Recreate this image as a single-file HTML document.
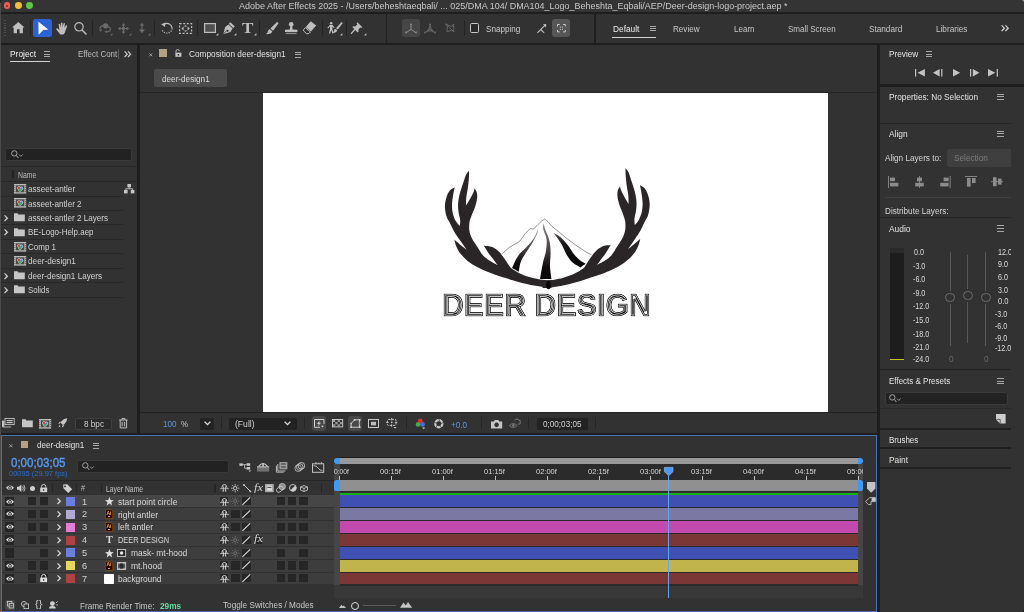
<!DOCTYPE html>
<html><head><meta charset="utf-8"><title>Adobe After Effects 2025</title>
<style>
*{box-sizing:border-box;margin:0;padding:0}
html,body{width:1024px;height:612px;overflow:hidden;background:#1e1e1e}
body{position:relative;font-family:"Liberation Sans","DejaVu Sans",sans-serif;font-size:9px;color:#c8c8c8}
.a{position:absolute}
.t{position:absolute;white-space:nowrap;line-height:14px;height:14px}
svg{position:absolute;overflow:visible}
</style></head><body><div id="app" style="position:absolute;left:0;top:0;width:1024px;height:612px;will-change:transform">
<div class="a" style="left:0.00px;top:0.00px;width:1024.00px;height:12.20px;background:#343434;"></div>
<div class="a" style="left:0.00px;top:13.80px;width:1024.00px;height:28.90px;background:#323232;"></div>
<div class="a" style="left:1.00px;top:45.00px;width:135.60px;height:387.60px;background:#323232;"></div>
<div class="a" style="left:139.50px;top:45.00px;width:737.40px;height:387.60px;background:#323232;"></div>
<div class="a" style="left:880.00px;top:45.00px;width:144.00px;height:567.00px;background:#323232;"></div>
<div class="a" style="left:0.00px;top:3.00px;width:0.90px;height:609.00px;background:#4b4b4b;"></div>
<div class="a" style="left:3.60px;top:2.20px;width:6.80px;height:6.80px;background:#ec5f57;border-radius:50%"></div>
<div class="a" style="left:14.90px;top:2.20px;width:6.80px;height:6.80px;background:#f5bd30;border-radius:50%"></div>
<div class="a" style="left:26.40px;top:2.20px;width:6.80px;height:6.80px;background:#5ec743;border-radius:50%"></div>
<div class="a" style="left:5.90px;top:4.50px;width:2.20px;height:2.20px;background:#8a1a14;border-radius:50%"></div>
<div class="t" style="left:238.50px;top:-1.20px;font-size:8.9px;color:#c9c9c9;transform:scaleX(1.0110);transform-origin:0 50%;">Adobe After Effects 2025 - /Users/beheshtaeqbali/ ... 025/DMA 104/ DMA104_Logo_Beheshta_Eqbali/AEP/Deer-design-logo-project.aep *</div>
<div class="a" style="left:3.90px;top:20.20px;width:1.80px;height:1.20px;background:#4c4c4c;"></div>
<div class="a" style="left:3.90px;top:22.60px;width:1.80px;height:1.20px;background:#4c4c4c;"></div>
<div class="a" style="left:3.90px;top:25.00px;width:1.80px;height:1.20px;background:#4c4c4c;"></div>
<div class="a" style="left:3.90px;top:27.40px;width:1.80px;height:1.20px;background:#4c4c4c;"></div>
<div class="a" style="left:3.90px;top:29.80px;width:1.80px;height:1.20px;background:#4c4c4c;"></div>
<div class="a" style="left:3.90px;top:32.20px;width:1.80px;height:1.20px;background:#4c4c4c;"></div>
<div class="a" style="left:3.90px;top:34.60px;width:1.80px;height:1.20px;background:#4c4c4c;"></div>
<svg style="left:11.90px;top:22.40px;" width="12.6" height="11.2" viewBox="0 0 12.6 11.2"><path d="M6.3 0 L12.6 5.6 L10.9 5.6 L10.9 11.2 L7.6 11.2 L7.6 7.2 L5 7.2 L5 11.2 L1.7 11.2 L1.7 5.6 L0 5.6 Z" fill="#bebebe"/></svg>
<div class="a" style="left:29.90px;top:19.80px;width:1.00px;height:16.00px;background:#242424;"></div>
<div class="a" style="left:33.10px;top:18.90px;width:18.50px;height:18.10px;background:#2d62d6;border-radius:2.5px"></div>
<svg style="left:33.10px;top:18.90px;" width="18.5" height="18.1" viewBox="0 0 18.5 18.1"><path d="M5.4 2.7 L15.2 10.6 L10.2 11 L5.6 15.8 Z" fill="#fff"/></svg>
<svg style="left:55.60px;top:22.00px;" width="12" height="12.4" viewBox="0 0 12 12.4"><path d="M3.2 6.2 L2.6 2.2 Q3.4 1.4 4 2.2 L4.8 5.4 L4.9 0.9 Q5.8 0 6.5 0.9 L6.6 5.3 L7.6 1.3 Q8.6 0.7 9 1.6 L8.4 5.8 L10.2 3.2 Q11.2 2.9 11.3 3.9 L9.6 8.2 Q9 11.2 7.4 12.4 L4.4 12.4 Q2.6 10.6 0.2 7.2 Q0.4 5.9 1.6 6.3 L3.4 8.2 Z" fill="#bebebe"/></svg>
<svg style="left:73.00px;top:21.00px;" width="14" height="14" viewBox="0 0 14 14"><circle cx="6" cy="5.8" r="4.2" fill="none" stroke="#bebebe" stroke-width="1.2"/><path d="M9 9 L13 13" stroke="#bebebe" stroke-width="1.5" stroke-linecap="round"/></svg>
<div class="a" style="left:92.10px;top:19.80px;width:1.00px;height:16.00px;background:#242424;"></div>
<svg style="left:98.50px;top:22.80px;" width="12.4" height="10" viewBox="0 0 12.4 10"><circle cx="6.6" cy="2.8" r="2.6" fill="#6c6c6c"/><path d="M4.2 2.6 Q0.4 3.4 1.2 6.2 M8.8 3.6 Q12.6 5 11 7.6 Q9.6 9.2 7 8.8" fill="none" stroke="#6c6c6c" stroke-width="1.1"/><path d="M0 6.4 L3.2 6.4 L1.6 9 Z M7.6 7.4 L7.6 10 L5.4 8.8 Z" fill="#6c6c6c"/></svg>
<svg style="left:110.20px;top:33.00px;" width="2.4" height="2.4" viewBox="0 0 2.4 2.4"><path d="M2.4 0 L2.4 2.4 L0 2.4 Z" fill="#6c6c6c"/></svg>
<svg style="left:118.00px;top:22.50px;" width="11" height="11" viewBox="0 0 11 11"><path d="M5.5 0 L7.4 2.4 L6.1 2.4 L6.1 4.9 L8.6 4.9 L8.6 3.6 L11 5.5 L8.6 7.4 L8.6 6.1 L6.1 6.1 L6.1 8.6 L7.4 8.6 L5.5 11 L3.6 8.6 L4.9 8.6 L4.9 6.1 L2.4 6.1 L2.4 7.4 L0 5.5 L2.4 3.6 L2.4 4.9 L4.9 4.9 L4.9 2.4 L3.6 2.4 Z" fill="#6c6c6c"/><circle cx="5.5" cy="5.5" r="1.7" fill="#6c6c6c"/></svg>
<svg style="left:128.80px;top:33.00px;" width="2.4" height="2.4" viewBox="0 0 2.4 2.4"><path d="M2.4 0 L2.4 2.4 L0 2.4 Z" fill="#6c6c6c"/></svg>
<svg style="left:139.20px;top:23.00px;" width="6" height="10.2" viewBox="0 0 6 10.2"><path d="M3 0 L5.2 2.6 L3.6 2.6 L3.6 6.4 L6 6.4 L3 10.2 L0 6.4 L2.4 6.4 L2.4 2.6 L0.8 2.6 Z" fill="#6c6c6c"/></svg>
<svg style="left:147.60px;top:33.00px;" width="2.4" height="2.4" viewBox="0 0 2.4 2.4"><path d="M2.4 0 L2.4 2.4 L0 2.4 Z" fill="#6c6c6c"/></svg>
<div class="a" style="left:154.10px;top:19.80px;width:1.00px;height:16.00px;background:#242424;"></div>
<svg style="left:161.00px;top:22.40px;" width="12" height="12" viewBox="0 0 12 12"><path d="M3.2 2.2 A5.3 5.3 0 0 1 11.2 6.4" fill="none" stroke="#bebebe" stroke-width="1.2"/><path d="M11.2 6.4 A5.3 5.3 0 0 1 1.2 8.2" fill="none" stroke="#bebebe" stroke-width="1.2" stroke-dasharray="1.1 1.3"/><path d="M0.2 2.2 L4.6 0.6 L3.8 5 Z" fill="#bebebe"/></svg>
<svg style="left:179.00px;top:22.60px;" width="13.2" height="11" viewBox="0 0 13.2 11"><rect x="0.6" y="0.6" width="12" height="9.8" fill="none" stroke="#bebebe" stroke-width="1.2" stroke-dasharray="2 1.6"/><path d="M2.4 5.5 L4.6 3.6 L4.6 7.4 Z M10.8 5.5 L8.6 3.6 L8.6 7.4 Z M6.6 2 L8.2 3.6 L5 3.6 Z M6.6 9 L8.2 7.4 L5 7.4 Z" fill="#bebebe"/></svg>
<div class="a" style="left:197.10px;top:19.80px;width:1.00px;height:16.00px;background:#242424;"></div>
<svg style="left:204.00px;top:23.00px;" width="12" height="10" viewBox="0 0 12 10"><rect x="0.6" y="0.6" width="10.8" height="8.8" fill="#505050" stroke="#bebebe" stroke-width="1.2"/></svg>
<svg style="left:216.40px;top:33.00px;" width="2.4" height="2.4" viewBox="0 0 2.4 2.4"><path d="M2.4 0 L2.4 2.4 L0 2.4 Z" fill="#bebebe"/></svg>
<svg style="left:222.80px;top:22.00px;" width="12" height="12.4" viewBox="0 0 12 12.4"><path d="M7.4 0.2 L11.8 4.4 L10.2 6 L5.8 1.8 Z" fill="#bebebe"/><path d="M5.4 2.4 L9.6 6.6 L7.4 10 L0.2 12.2 L2.2 5 Z M4.6 7.8 A1 1 0 1 0 4.61 7.8 Z" fill="#bebebe" fill-rule="evenodd"/><path d="M0.4 12 L4.2 8.2" stroke="#323232" stroke-width="0.8"/></svg>
<svg style="left:234.40px;top:33.00px;" width="2.4" height="2.4" viewBox="0 0 2.4 2.4"><path d="M2.4 0 L2.4 2.4 L0 2.4 Z" fill="#bebebe"/></svg>
<div class="t" style="left:242.20px;top:20.60px;font-size:15px;color:#bebebe;font-weight:700;font-family:'Liberation Serif','DejaVu Serif',serif;transform:scaleX(1.1382);transform-origin:0 50%;">T</div>
<svg style="left:253.60px;top:33.00px;" width="2.4" height="2.4" viewBox="0 0 2.4 2.4"><path d="M2.4 0 L2.4 2.4 L0 2.4 Z" fill="#bebebe"/></svg>
<div class="a" style="left:259.00px;top:19.80px;width:1.00px;height:16.00px;background:#242424;"></div>
<svg style="left:266.00px;top:22.00px;" width="12.4" height="12.2" viewBox="0 0 12.4 12.2"><path d="M11 0 Q12.8 0.2 12.3 1.8 L7 8.8 L4.4 6.6 Z" fill="#bebebe"/><path d="M3.8 7.2 L6.2 9.2 Q6 12 0 12.2 Q2 10.8 2 9 Q2.4 7.2 3.8 7.2 Z" fill="#bebebe"/></svg>
<svg style="left:285.00px;top:21.80px;" width="12.4" height="12.2" viewBox="0 0 12.4 12.2"><circle cx="6.2" cy="2.3" r="2.3" fill="#bebebe"/><path d="M5.2 3.6 L7.2 3.6 L7.6 7.4 L12.4 7.8 L12.4 10 L0 10 L0 7.8 L4.8 7.4 Z" fill="#bebebe"/><rect x="0.8" y="10.8" width="10.8" height="1.3" fill="#8a8a8a"/></svg>
<svg style="left:303.40px;top:21.40px;" width="13.4" height="13" viewBox="0 0 13.4 13"><path d="M7.8 0.2 L13.2 4.6 L8 10.6 L2.8 6 Z" fill="#bebebe"/><path d="M2.4 6.6 L7.4 11 L5.8 12.6 L3.8 12.8 L0.6 10 L0.6 8.6 Z" fill="none" stroke="#bebebe" stroke-width="1"/></svg>
<div class="a" style="left:321.90px;top:19.80px;width:1.00px;height:16.00px;background:#242424;"></div>
<svg style="left:326.80px;top:22.00px;" width="15.6" height="11.6" viewBox="0 0 15.6 11.6"><circle cx="4.2" cy="1.3" r="1.3" fill="#bebebe"/><path d="M2.8 3 L5.6 3 L7.6 5.4 L7 6 L5.4 4.8 L5.4 7.2 L6.6 11.2 L5.4 11.4 L4.2 8 L3.2 11.4 L2 11.2 L3 7 L3 4.6 L1 6.4 L0.4 5.8 Z" fill="#bebebe"/><path d="M14.6 0 Q15.8 0.4 15.4 1.4 L10.8 7.6 L9 6.2 Z" fill="#bebebe"/><path d="M8.4 6.8 L10.2 8.2 Q10 10.6 5.4 11 Q7 9.8 7 8.4 Q7.4 6.8 8.4 6.8 Z" fill="#bebebe"/></svg>
<svg style="left:339.80px;top:33.00px;" width="2.4" height="2.4" viewBox="0 0 2.4 2.4"><path d="M2.4 0 L2.4 2.4 L0 2.4 Z" fill="#bebebe"/></svg>
<div class="a" style="left:346.00px;top:19.80px;width:1.00px;height:16.00px;background:#242424;"></div>
<svg style="left:351.20px;top:21.60px;" width="11.6" height="11.8" viewBox="0 0 11.6 11.8"><path d="M6.4 0.2 L11.4 5.2 L10.2 6 L9.2 5.4 L7.4 7.4 L7.6 9.6 L6.6 10.4 L1.4 5 L2.2 4.2 L4.4 4.4 L6.4 2.6 L5.6 1.4 Z" fill="#bebebe"/><path d="M3.6 7.8 L0.4 11.4" stroke="#bebebe" stroke-width="1.3" stroke-linecap="round"/></svg>
<svg style="left:363.80px;top:33.00px;" width="2.4" height="2.4" viewBox="0 0 2.4 2.4"><path d="M2.4 0 L2.4 2.4 L0 2.4 Z" fill="#bebebe"/></svg>
<div class="a" style="left:385.90px;top:13.80px;width:1.50px;height:28.90px;background:#1f1f1f;"></div>
<div class="a" style="left:401.90px;top:19.20px;width:17.90px;height:17.60px;background:#464646;border-radius:3px"></div>
<svg style="left:404.70px;top:22.50px;" width="12" height="11" viewBox="0 0 12 11"><path d="M6 1.4 L6 6.4 L1.4 9.4 M6 6.4 L10.6 9.4" fill="none" stroke="#8c8c8c" stroke-width="1"/><path d="M6 0 L7.3 2.2 L4.7 2.2 Z M0 10.4 L0.7 7.9 L2.5 9.9 Z M12 10.4 L11.3 7.9 L9.5 9.9 Z" fill="#8c8c8c"/></svg>
<svg style="left:424.20px;top:22.50px;" width="12" height="11" viewBox="0 0 12 11"><path d="M6 1.4 L6 6.4 L1.4 9.4 M6 6.4 L10.6 9.4" fill="none" stroke="#6c6c6c" stroke-width="1"/><path d="M6 0 L7.3 2.2 L4.7 2.2 Z M0 10.4 L0.7 7.9 L2.5 9.9 Z M12 10.4 L11.3 7.9 L9.5 9.9 Z" fill="#6c6c6c"/><path d="M6 3.4 L8.8 8 L3.2 8 Z" fill="none" stroke="#6c6c6c" stroke-width="0.9"/></svg>
<svg style="left:445.00px;top:23.00px;" width="9.6" height="9.8" viewBox="0 0 9.6 9.8"><path d="M2.4 2.4 L7.4 3.4 L8.6 1 L8.8 8.8 L6.6 7.2 L2 8.8 Z" fill="none" stroke="#6c6c6c" stroke-width="0.9"/><path d="M0.4 0.4 L3 1 L1 3 Z" fill="#6c6c6c"/><path d="M0.8 0.8 L8 8" stroke="#6c6c6c" stroke-width="0.7"/></svg>
<div class="a" style="left:463.90px;top:19.80px;width:1.00px;height:16.00px;background:#242424;"></div>
<div class="a" style="left:469.80px;top:23.30px;width:9.20px;height:9.30px;background:#2a2a2a;border:1.4px solid #cacaca;border-radius:1.6px"></div>
<div class="t" style="left:486.00px;top:21.90px;font-size:9.4px;color:#cdcdcd;transform:scaleX(0.8656);transform-origin:0 50%;">Snapping</div>
<svg style="left:536.50px;top:23.90px;" width="9.4" height="9.2" viewBox="0 0 9.4 9.2"><path d="M3.6 5.6 L8.4 0.8" stroke="#bebebe" stroke-width="1.1"/><path d="M9.3 0 L9 3.4 L5.9 0.3 Z" fill="#bebebe"/><path d="M0.4 8.8 L3.8 5.6 L7.2 8.8" fill="none" stroke="#bebebe" stroke-width="1.1"/></svg>
<div class="a" style="left:552.00px;top:18.90px;width:17.90px;height:17.90px;background:#565656;border-radius:3px"></div>
<svg style="left:556.60px;top:23.80px;" width="8.8" height="8.4" viewBox="0 0 8.8 8.4"><path d="M0.5 2.4 L0.5 0.5 L2.6 0.5 M6.2 0.5 L8.3 0.5 L8.3 2.4 M8.3 6 L8.3 7.9 L6.2 7.9 M2.6 7.9 L0.5 7.9 L0.5 6" fill="none" stroke="#d0d0d0" stroke-width="1"/><path d="M3.4 2.6 L3.4 3.6 M5.4 2.6 L5.4 3.6 M3.4 4.8 L3.4 5.8 M5.4 4.8 L5.4 5.8" stroke="#d0d0d0" stroke-width="1"/></svg>
<div class="a" style="left:594.20px;top:13.80px;width:1.50px;height:28.90px;background:#1f1f1f;"></div>
<div class="t" style="left:612.60px;top:21.90px;font-size:9.3px;color:#ececec;transform:scaleX(0.8959);transform-origin:0 50%;">Default</div>
<div class="a" style="left:649.60px;top:25.60px;width:6.00px;height:0.80px;background:#a8a8a8;"></div>
<div class="a" style="left:649.60px;top:27.90px;width:6.00px;height:0.80px;background:#a8a8a8;"></div>
<div class="a" style="left:649.60px;top:30.20px;width:6.00px;height:0.80px;background:#a8a8a8;"></div>
<div class="a" style="left:611.80px;top:36.50px;width:43.80px;height:1.60px;background:#d2d2d2;"></div>
<div class="t" style="left:673.00px;top:21.90px;font-size:9.3px;color:#c8c8c8;transform:scaleX(0.8726);transform-origin:0 50%;">Review</div>
<div class="t" style="left:733.60px;top:21.90px;font-size:9.3px;color:#c8c8c8;transform:scaleX(0.8662);transform-origin:0 50%;">Learn</div>
<div class="t" style="left:788.00px;top:21.90px;font-size:9.3px;color:#c8c8c8;transform:scaleX(0.8608);transform-origin:0 50%;">Small Screen</div>
<div class="t" style="left:869.00px;top:21.90px;font-size:9.3px;color:#c8c8c8;transform:scaleX(0.8798);transform-origin:0 50%;">Standard</div>
<div class="t" style="left:936.00px;top:21.90px;font-size:9.3px;color:#c8c8c8;transform:scaleX(0.8806);transform-origin:0 50%;">Libraries</div>
<svg style="left:1001.00px;top:25.20px;" width="8" height="6.4" viewBox="0 0 8 6.4"><path d="M0.6 0.4 L3.4 3.2 L0.6 6 M4.4 0.4 L7.2 3.2 L4.4 6" fill="none" stroke="#d8d8d8" stroke-width="1.2"/></svg>
<div class="t" style="left:9.50px;top:47.20px;font-size:9.2px;color:#f0f0f0;transform:scaleX(0.9123);transform-origin:0 50%;">Project</div>
<div class="a" style="left:44.00px;top:51.30px;width:6.00px;height:0.80px;background:#a8a8a8;"></div>
<div class="a" style="left:44.00px;top:53.80px;width:6.00px;height:0.80px;background:#a8a8a8;"></div>
<div class="a" style="left:44.00px;top:56.30px;width:6.00px;height:0.80px;background:#a8a8a8;"></div>
<div class="a" style="left:9.50px;top:60.60px;width:40.60px;height:1.30px;background:#d2d2d2;"></div>
<div class="t" style="left:78.20px;top:47.20px;font-size:9.2px;color:#bdbdbd;transform:scaleX(0.8654);transform-origin:0 50%;">Effect Cont</div>
<div class="a" style="left:117.80px;top:48.50px;width:0.80px;height:10.50px;background:#5a5a5a;"></div>
<svg style="left:124.40px;top:51.00px;" width="7.4" height="6.4" viewBox="0 0 7.4 6.4"><path d="M0.6 0.4 L3.2 3.2 L0.6 6 M4 0.4 L6.6 3.2 L4 6" fill="none" stroke="#d0d0d0" stroke-width="1.2"/></svg>
<div class="a" style="left:5.40px;top:147.60px;width:126.30px;height:13.80px;background:#222222;border-radius:2.5px;border:0.6px solid #3a3a3a"></div>
<svg style="left:10.60px;top:150.30px;" width="12.6" height="9" viewBox="0 0 12.6 9"><circle cx="3.3" cy="3.4" r="2.7" fill="none" stroke="#b0b0b0" stroke-width="0.9"/><path d="M5.3 5.5 L7.4 8" stroke="#b0b0b0" stroke-width="1"/><path d="M8 4.6 L9.8 6.4 L11.8 4.4" fill="none" stroke="#b0b0b0" stroke-width="0.8"/></svg>
<div class="a" style="left:1.00px;top:166.20px;width:135.60px;height:0.80px;background:#282828;"></div>
<div class="a" style="left:11.90px;top:170.40px;width:1.70px;height:8.00px;background:#222222;"></div>
<div class="t" style="left:17.70px;top:168.40px;font-size:8.3px;color:#bcbcbc;transform:scaleX(0.8265);transform-origin:0 50%;">Name</div>
<div class="a" style="left:1.00px;top:181.00px;width:135.60px;height:0.80px;background:#282828;"></div>
<div class="t" style="left:28.00px;top:182.10px;font-size:9.2px;color:#d2d2d2;transform:scaleX(0.8866);transform-origin:0 50%;">asseet-antler</div>
<svg style="left:13.60px;top:183.90px;" width="12.2" height="9.6" viewBox="0 0 12.2 9.6"><rect x="0" y="0" width="12.2" height="9.6" fill="#bcbcbc"/><rect x="1.9" y="1.3" width="8.4" height="7" fill="#4a4a4a"/><circle cx="4.9" cy="4" r="1.8" fill="#d8d8d8"/><circle cx="7.3" cy="4.4" r="1.8" fill="#d8d8d8"/><circle cx="6" cy="6" r="1.7" fill="#d8d8d8"/><circle cx="4.9" cy="4" r="1.25" fill="#d04a3a"/><circle cx="7.3" cy="4.4" r="1.25" fill="#3a8fd8"/><circle cx="6" cy="6" r="1.2" fill="#3faa50"/><path d="M0.4 1.6 h0.9 M0.4 3.6 h0.9 M0.4 5.6 h0.9 M0.4 7.6 h0.9 M10.9 1.6 h0.9 M10.9 3.6 h0.9 M10.9 5.6 h0.9 M10.9 7.6 h0.9" stroke="#3a3a3a" stroke-width="0.9"/></svg>
<div class="a" style="left:1.00px;top:195.50px;width:122.00px;height:0.80px;background:#282828;"></div>
<div class="t" style="left:28.00px;top:196.55px;font-size:9.2px;color:#d2d2d2;transform:scaleX(0.8819);transform-origin:0 50%;">asseet-antler 2</div>
<svg style="left:13.60px;top:198.35px;" width="12.2" height="9.6" viewBox="0 0 12.2 9.6"><rect x="0" y="0" width="12.2" height="9.6" fill="#bcbcbc"/><rect x="1.9" y="1.3" width="8.4" height="7" fill="#4a4a4a"/><circle cx="4.9" cy="4" r="1.8" fill="#d8d8d8"/><circle cx="7.3" cy="4.4" r="1.8" fill="#d8d8d8"/><circle cx="6" cy="6" r="1.7" fill="#d8d8d8"/><circle cx="4.9" cy="4" r="1.25" fill="#d04a3a"/><circle cx="7.3" cy="4.4" r="1.25" fill="#3a8fd8"/><circle cx="6" cy="6" r="1.2" fill="#3faa50"/><path d="M0.4 1.6 h0.9 M0.4 3.6 h0.9 M0.4 5.6 h0.9 M0.4 7.6 h0.9 M10.9 1.6 h0.9 M10.9 3.6 h0.9 M10.9 5.6 h0.9 M10.9 7.6 h0.9" stroke="#3a3a3a" stroke-width="0.9"/></svg>
<div class="a" style="left:1.00px;top:209.95px;width:122.00px;height:0.80px;background:#282828;"></div>
<div class="t" style="left:28.00px;top:211.00px;font-size:9.2px;color:#d2d2d2;transform:scaleX(0.8800);transform-origin:0 50%;">asseet-antler 2 Layers</div>
<svg style="left:14.30px;top:213.20px;" width="10.8" height="8.2" viewBox="0 0 10.8 8.2"><path d="M0 0.2 L3.6 0.2 L4.4 1.4 L10.8 1.4 L10.8 8.2 L0 8.2 Z" fill="#c6c6c6"/></svg>
<svg style="left:3.70px;top:215.00px;" width="4.0" height="6.4" viewBox="0 0 4 6.4"><path d="M0.5 0.4 L3.4 3.2 L0.5 6" fill="none" stroke="#d0d0d0" stroke-width="1.25"/></svg>
<div class="a" style="left:1.00px;top:224.40px;width:122.00px;height:0.80px;background:#282828;"></div>
<div class="t" style="left:28.00px;top:225.45px;font-size:9.2px;color:#d2d2d2;transform:scaleX(0.8665);transform-origin:0 50%;">BE-Logo-Help.aep</div>
<svg style="left:14.30px;top:227.65px;" width="10.8" height="8.2" viewBox="0 0 10.8 8.2"><path d="M0 0.2 L3.6 0.2 L4.4 1.4 L10.8 1.4 L10.8 8.2 L0 8.2 Z" fill="#c6c6c6"/></svg>
<svg style="left:3.70px;top:229.45px;" width="4.0" height="6.4" viewBox="0 0 4 6.4"><path d="M0.5 0.4 L3.4 3.2 L0.5 6" fill="none" stroke="#d0d0d0" stroke-width="1.25"/></svg>
<div class="a" style="left:1.00px;top:238.85px;width:122.00px;height:0.80px;background:#282828;"></div>
<div class="t" style="left:28.00px;top:239.90px;font-size:9.2px;color:#d2d2d2;transform:scaleX(0.8703);transform-origin:0 50%;">Comp 1</div>
<svg style="left:13.60px;top:241.70px;" width="12.2" height="9.6" viewBox="0 0 12.2 9.6"><rect x="0" y="0" width="12.2" height="9.6" fill="#bcbcbc"/><rect x="1.9" y="1.3" width="8.4" height="7" fill="#4a4a4a"/><circle cx="4.9" cy="4" r="1.8" fill="#d8d8d8"/><circle cx="7.3" cy="4.4" r="1.8" fill="#d8d8d8"/><circle cx="6" cy="6" r="1.7" fill="#d8d8d8"/><circle cx="4.9" cy="4" r="1.25" fill="#d04a3a"/><circle cx="7.3" cy="4.4" r="1.25" fill="#3a8fd8"/><circle cx="6" cy="6" r="1.2" fill="#3faa50"/><path d="M0.4 1.6 h0.9 M0.4 3.6 h0.9 M0.4 5.6 h0.9 M0.4 7.6 h0.9 M10.9 1.6 h0.9 M10.9 3.6 h0.9 M10.9 5.6 h0.9 M10.9 7.6 h0.9" stroke="#3a3a3a" stroke-width="0.9"/></svg>
<div class="a" style="left:1.00px;top:253.30px;width:122.00px;height:0.80px;background:#282828;"></div>
<div class="t" style="left:28.00px;top:254.35px;font-size:9.2px;color:#d2d2d2;transform:scaleX(0.8930);transform-origin:0 50%;">deer-design1</div>
<svg style="left:13.60px;top:256.15px;" width="12.2" height="9.6" viewBox="0 0 12.2 9.6"><rect x="0" y="0" width="12.2" height="9.6" fill="#bcbcbc"/><rect x="1.9" y="1.3" width="8.4" height="7" fill="#4a4a4a"/><circle cx="4.9" cy="4" r="1.8" fill="#d8d8d8"/><circle cx="7.3" cy="4.4" r="1.8" fill="#d8d8d8"/><circle cx="6" cy="6" r="1.7" fill="#d8d8d8"/><circle cx="4.9" cy="4" r="1.25" fill="#d04a3a"/><circle cx="7.3" cy="4.4" r="1.25" fill="#3a8fd8"/><circle cx="6" cy="6" r="1.2" fill="#3faa50"/><path d="M0.4 1.6 h0.9 M0.4 3.6 h0.9 M0.4 5.6 h0.9 M0.4 7.6 h0.9 M10.9 1.6 h0.9 M10.9 3.6 h0.9 M10.9 5.6 h0.9 M10.9 7.6 h0.9" stroke="#3a3a3a" stroke-width="0.9"/></svg>
<div class="a" style="left:1.00px;top:267.75px;width:122.00px;height:0.80px;background:#282828;"></div>
<div class="t" style="left:28.00px;top:268.80px;font-size:9.2px;color:#d2d2d2;transform:scaleX(0.8834);transform-origin:0 50%;">deer-design1 Layers</div>
<svg style="left:14.30px;top:271.00px;" width="10.8" height="8.2" viewBox="0 0 10.8 8.2"><path d="M0 0.2 L3.6 0.2 L4.4 1.4 L10.8 1.4 L10.8 8.2 L0 8.2 Z" fill="#c6c6c6"/></svg>
<svg style="left:3.70px;top:272.80px;" width="4.0" height="6.4" viewBox="0 0 4 6.4"><path d="M0.5 0.4 L3.4 3.2 L0.5 6" fill="none" stroke="#d0d0d0" stroke-width="1.25"/></svg>
<div class="a" style="left:1.00px;top:282.20px;width:122.00px;height:0.80px;background:#282828;"></div>
<div class="t" style="left:28.00px;top:283.25px;font-size:9.2px;color:#d2d2d2;transform:scaleX(0.8549);transform-origin:0 50%;">Solids</div>
<svg style="left:14.30px;top:285.45px;" width="10.8" height="8.2" viewBox="0 0 10.8 8.2"><path d="M0 0.2 L3.6 0.2 L4.4 1.4 L10.8 1.4 L10.8 8.2 L0 8.2 Z" fill="#c6c6c6"/></svg>
<svg style="left:3.70px;top:287.25px;" width="4.0" height="6.4" viewBox="0 0 4 6.4"><path d="M0.5 0.4 L3.4 3.2 L0.5 6" fill="none" stroke="#d0d0d0" stroke-width="1.25"/></svg>
<div class="a" style="left:1.00px;top:296.65px;width:122.00px;height:0.80px;background:#282828;"></div>
<svg style="left:124.00px;top:184.00px;" width="10.4" height="9.4" viewBox="0 0 10.4 9.4"><rect x="3.4" y="0" width="3.6" height="3.4" fill="#c6c6c6"/><rect x="0" y="6" width="3.6" height="3.4" fill="#c6c6c6"/><rect x="6.8" y="6" width="3.6" height="3.4" fill="#c6c6c6"/><path d="M5.2 3.4 L5.2 4.8 M1.8 6 L1.8 4.8 L8.6 4.8 L8.6 6" fill="none" stroke="#c6c6c6" stroke-width="0.9"/></svg>
<svg style="left:2.00px;top:418.40px;" width="12.6" height="9.6" viewBox="0 0 12.6 9.6"><rect x="3" y="0.4" width="9.2" height="6.2" fill="none" stroke="#c6c6c6" stroke-width="0.9"/><rect x="4.6" y="2" width="6" height="1.2" fill="#c6c6c6"/><rect x="4.6" y="4" width="6" height="1.2" fill="#c6c6c6"/><path d="M0.6 3 L0.6 9 L9 9" fill="none" stroke="#c6c6c6" stroke-width="0.9"/><rect x="0" y="2.6" width="2.4" height="6" fill="#c6c6c6"/></svg>
<svg style="left:22.00px;top:419.20px;" width="10.8" height="8.2" viewBox="0 0 10.8 8.2"><path d="M0 0.2 L3.6 0.2 L4.4 1.4 L10.8 1.4 L10.8 8.2 L0 8.2 Z" fill="#c6c6c6"/></svg>
<svg style="left:39.40px;top:418.60px;" width="12.2" height="9.6" viewBox="0 0 12.2 9.6"><rect x="0" y="0" width="12.2" height="9.6" fill="#bcbcbc"/><rect x="1.9" y="1.3" width="8.4" height="7" fill="#4a4a4a"/><circle cx="4.9" cy="4" r="1.8" fill="#d8d8d8"/><circle cx="7.3" cy="4.4" r="1.8" fill="#d8d8d8"/><circle cx="6" cy="6" r="1.7" fill="#d8d8d8"/><circle cx="4.9" cy="4" r="1.25" fill="#d04a3a"/><circle cx="7.3" cy="4.4" r="1.25" fill="#3a8fd8"/><circle cx="6" cy="6" r="1.2" fill="#3faa50"/><path d="M0.4 1.6 h0.9 M0.4 3.6 h0.9 M0.4 5.6 h0.9 M0.4 7.6 h0.9 M10.9 1.6 h0.9 M10.9 3.6 h0.9 M10.9 5.6 h0.9 M10.9 7.6 h0.9" stroke="#3a3a3a" stroke-width="0.9"/></svg>
<svg style="left:58.00px;top:418.00px;" width="9.4" height="10" viewBox="0 0 9.4 10"><path d="M9.2 0.2 Q9.4 3.4 6.4 6.2 L4.8 7 L2.6 4.8 L3.4 3.2 Q6 0.2 9.2 0.2 Z M1.8 5.6 L0.2 6 L1.6 3.8 L2.8 3.8 Z M4.2 7.8 L3.8 9.6 L6 8 L6 6.8 Z M1.4 7 L2.6 8.2 L0.4 9.4 Z" fill="#c6c6c6"/></svg>
<div class="a" style="left:74.60px;top:417.60px;width:37.40px;height:12.00px;background:#2a2a2a;border-radius:2px;border:0.6px solid #404040"></div>
<div class="t" style="left:83.60px;top:416.60px;font-size:9px;color:#d0d0d0;transform:scaleX(0.9078);transform-origin:0 50%;">8 bpc</div>
<svg style="left:118.80px;top:418.20px;" width="8.8" height="10.4" viewBox="0 0 8.8 10.4"><path d="M0.2 2 L8.6 2 M3 2 L3 0.5 L5.8 0.5 L5.8 2 M1.2 2 L1.2 9.9 L7.6 9.9 L7.6 2 M3.2 3.8 L3.2 8.4 M5.6 3.8 L5.6 8.4" fill="none" stroke="#c6c6c6" stroke-width="0.95"/></svg>
<svg style="left:149.20px;top:52.80px;" width="3.6" height="3.6" viewBox="0 0 3.6 3.6"><path d="M0.3 0.3 L3.3 3.3 M3.3 0.3 L0.3 3.3" stroke="#b4b4b4" stroke-width="0.8"/></svg>
<div class="a" style="left:158.80px;top:48.60px;width:8.20px;height:8.00px;background:#b5a283;"></div>
<svg style="left:175.20px;top:48.80px;" width="6.6" height="8" viewBox="0 0 6.6 8"><path d="M1 3.6 L1 2 Q1.2 0.5 2.7 0.5 Q4.2 0.5 4.3 2" fill="none" stroke="#c6c6c6" stroke-width="0.9"/><rect x="0.4" y="3.6" width="6" height="4.2" fill="#c6c6c6"/><rect x="2.7" y="5" width="1.4" height="1.6" fill="#323232"/></svg>
<div class="t" style="left:189.00px;top:47.40px;font-size:9.2px;color:#e2e2e2;transform:scaleX(0.9007);transform-origin:0 50%;">Composition deer-design1</div>
<div class="a" style="left:295.00px;top:51.50px;width:6.00px;height:0.80px;background:#a8a8a8;"></div>
<div class="a" style="left:295.00px;top:54.00px;width:6.00px;height:0.80px;background:#a8a8a8;"></div>
<div class="a" style="left:295.00px;top:56.50px;width:6.00px;height:0.80px;background:#a8a8a8;"></div>
<div class="a" style="left:154.00px;top:69.00px;width:73.00px;height:17.50px;background:#4b4b4b;border-radius:2.5px"></div>
<div class="t" style="left:161.50px;top:71.60px;font-size:9.2px;color:#d8d8d8;transform:scaleX(0.8893);transform-origin:0 50%;">deer-design1</div>
<div class="a" style="left:139.50px;top:91.60px;width:737.40px;height:1.40px;background:#262626;"></div>
<div class="a" style="left:139.50px;top:411.80px;width:737.40px;height:1.50px;background:#222222;"></div>
<div class="a" style="left:262.80px;top:92.90px;width:565.10px;height:318.90px;background:#ffffff;"></div>
<div class="t" style="left:163.00px;top:417.40px;font-size:9.2px;color:#5b96e2;transform:scaleX(0.8864);transform-origin:0 50%;">100</div>
<div class="t" style="left:181.00px;top:417.40px;font-size:9.2px;color:#c8c8c8;transform:scaleX(0.8566);transform-origin:0 50%;">%</div>
<div class="a" style="left:200.00px;top:417.60px;width:14.00px;height:12.40px;background:#222222;border-radius:2px"></div>
<svg style="left:203.60px;top:421.40px;" width="7" height="4.6" viewBox="0 0 7 4.6"><path d="M0.6 0.6 L3.5 3.6 L6.4 0.6" fill="none" stroke="#e0e0e0" stroke-width="1.3"/></svg>
<div class="a" style="left:221.10px;top:417.40px;width:1.00px;height:11.20px;background:#262626;"></div>
<div class="a" style="left:229.00px;top:417.60px;width:68.00px;height:12.40px;background:#222222;border-radius:2px"></div>
<div class="t" style="left:235.00px;top:417.20px;font-size:9.2px;color:#d0d0d0;transform:scaleX(0.9361);transform-origin:0 50%;">(Full)</div>
<svg style="left:283.60px;top:421.40px;" width="7" height="4.6" viewBox="0 0 7 4.6"><path d="M0.6 0.6 L3.5 3.6 L6.4 0.6" fill="none" stroke="#e0e0e0" stroke-width="1.3"/></svg>
<div class="a" style="left:304.20px;top:417.40px;width:1.00px;height:11.20px;background:#262626;"></div>
<div class="a" style="left:311.90px;top:415.80px;width:14.40px;height:15.00px;background:#484848;border-radius:3px"></div>
<svg style="left:314.40px;top:419.20px;" width="10.2" height="8.8" viewBox="0 0 10.2 8.8"><path d="M10 5 L10 0.5 L0.5 0.5 L0.5 8.3 L6 8.3" fill="none" stroke="#d2d2d2" stroke-width="1"/><path d="M5.6 1.6 L3 5 L4.8 5 L4 7.4 L7 3.8 L5.2 3.8 Z" fill="#d2d2d2"/><path d="M7 6.8 L10 6.8 L8.5 8.6 Z" fill="#d2d2d2"/></svg>
<svg style="left:331.90px;top:419.40px;" width="11.2" height="8.4" viewBox="0 0 11.2 8.4"><rect x="0.5" y="0.5" width="10.2" height="7.4" fill="none" stroke="#d2d2d2" stroke-width="0.9"/><path d="M1 1 h2.3 v2.1 h-2.3 Z M5.6 1 h2.3 v2.1 h-2.3 Z M3.3 3.1 h2.3 v2.1 h-2.3 Z M7.9 3.1 h2.3 v2.1 h-2.3 Z M1 5.2 h2.3 v2.2 h-2.3 Z M5.6 5.2 h2.3 v2.2 h-2.3 Z" fill="#9a9a9a"/></svg>
<div class="a" style="left:348.10px;top:415.80px;width:14.40px;height:15.00px;background:#484848;border-radius:3px"></div>
<svg style="left:350.20px;top:418.80px;" width="10.6" height="9.2" viewBox="0 0 10.6 9.2"><path d="M1 8.2 L1.2 4.6 L4.6 0.8 L9.6 0.8 L9.2 4.4 L9.6 8.2 Z" fill="none" stroke="#d2d2d2" stroke-width="0.95"/><path d="M0.2 7.4 h1.7 v1.7 h-1.7 Z M3.8 0 h1.7 v1.7 h-1.7 Z M8.8 0 h1.7 v1.7 h-1.7 Z M8.8 7.4 h1.7 v1.7 h-1.7 Z M0.4 3.8 h1.5 v1.5 h-1.5 Z" fill="#d2d2d2"/></svg>
<svg style="left:368.10px;top:419.00px;" width="11" height="9" viewBox="0 0 11 9"><rect x="0.5" y="0.5" width="10" height="8" fill="none" stroke="#d2d2d2" stroke-width="0.95"/><rect x="3" y="2.8" width="5" height="3.6" fill="#bdbdbd"/></svg>
<svg style="left:386.00px;top:418.40px;" width="11.4" height="10.4" viewBox="0 0 11.4 10.4"><rect x="1.4" y="1.4" width="8.6" height="6" rx="1" fill="none" stroke="#d2d2d2" stroke-width="0.9" stroke-dasharray="2.2 1.1"/><path d="M5.7 0 L5.7 2.6 M5.7 6.2 L5.7 8.8 M0 4.4 L2.6 4.4 M8.8 4.4 L11.4 4.4 M4.9 4.4 L6.5 4.4 M5.7 3.6 L5.7 5.2" stroke="#d2d2d2" stroke-width="0.85"/><path d="M7.6 9 L10.6 9 L9.1 10.6 Z" fill="#d2d2d2"/></svg>
<div class="a" style="left:405.70px;top:417.40px;width:1.00px;height:11.20px;background:#262626;"></div>
<svg style="left:415.00px;top:417.60px;" width="10.5" height="11.4" viewBox="0 0 10.5 11.4"><circle cx="3.1" cy="6.4" r="2.4" fill="#3fb23f"/><circle cx="7.5" cy="6.4" r="2.4" fill="#3f6fe8"/><circle cx="5.3" cy="3" r="2.4" fill="#e03030"/><path d="M7.2 9.6 L10.2 9.6 L8.7 11.2 Z" fill="#d2d2d2"/></svg>
<svg style="left:434.00px;top:418.70px;" width="9.6" height="9.6" viewBox="0 0 9.6 9.6"><circle cx="4.8" cy="4.8" r="3.6" fill="none" stroke="#c8c8c8" stroke-width="2.2"/><path d="M4.8 0 L6.4 3.6 M9.4 3.4 L5.8 5.2 M7.6 9 L5.2 5.6 M1.8 8.8 L3.6 5.2 M0.2 3.6 L4 4" stroke="#323232" stroke-width="0.7"/></svg>
<div class="t" style="left:451.00px;top:417.60px;font-size:9.2px;color:#5b96e2;transform:scaleX(0.8765);transform-origin:0 50%;">+0.0</div>
<div class="a" style="left:481.40px;top:417.40px;width:1.00px;height:11.20px;background:#262626;"></div>
<svg style="left:490.90px;top:419.50px;" width="11.2" height="8.4" viewBox="0 0 11.2 8.4"><path d="M0 1.6 L3 1.6 L3.8 0 L7.4 0 L8.2 1.6 L11.2 1.6 L11.2 8.4 L0 8.4 Z M5.6 2.6 A2.3 2.3 0 1 0 5.61 2.6 Z" fill="#c6c6c6" fill-rule="evenodd"/></svg>
<svg style="left:509.00px;top:418.60px;" width="11.4" height="9.8" viewBox="0 0 11.4 9.8"><path d="M0.4 6.6 Q4 2.6 8.2 6.4 Q4.4 10.4 0.4 6.6 Z" fill="none" stroke="#7a7a7a" stroke-width="0.9"/><circle cx="4.4" cy="6.4" r="1.3" fill="#7a7a7a"/><path d="M5.6 1.4 L6.6 0.2 L9.4 0.2 L10 1.4 L11.2 1.4 L11.2 5 L8.8 5" fill="none" stroke="#7a7a7a" stroke-width="0.9"/></svg>
<div class="a" style="left:528.30px;top:417.40px;width:1.00px;height:11.20px;background:#262626;"></div>
<div class="a" style="left:537.20px;top:417.50px;width:50.60px;height:12.20px;background:#222222;border-radius:2px"></div>
<div class="t" style="left:542.80px;top:416.90px;font-size:9px;color:#d0d0d0;transform:scaleX(0.9049);transform-origin:0 50%;">0;00;03;05</div>
<div class="a" style="left:595.40px;top:417.40px;width:1.00px;height:11.20px;background:#262626;"></div>
<svg style="left:0.00px;top:0.00px;" width="1024" height="612" viewBox="0 0 1024 612"><defs><linearGradient id="rg" x1="0" y1="0" x2="0" y2="1"><stop offset="0" stop-color="#8a8486"/><stop offset="0.45" stop-color="#4a4446"/><stop offset="0.8" stop-color="#0c0a0b"/></linearGradient><linearGradient id="rg3" x1="0" y1="0" x2="0" y2="1"><stop offset="0" stop-color="#5a5456"/><stop offset="0.3" stop-color="#1a1718"/><stop offset="0.7" stop-color="#0a0909"/></linearGradient></defs><path d="M538.2 228.4C537.5 230.0 536.0 234.8 534.1 237.9C532.2 241.0 529.2 244.1 526.8 246.8C524.3 249.5 521.5 251.4 519.4 254.1C517.3 256.8 515.5 260.6 514.3 262.9C513.1 265.2 512.4 267.2 512.0 268.1C513.1 268.7 517.6 271.2 518.7 271.8C519.1 270.1 519.7 264.7 520.9 261.5C522.1 258.3 524.0 255.8 526.0 252.6C528.0 249.4 530.8 245.6 532.6 242.4C534.5 239.2 536.2 235.8 537.1 233.5C538.0 231.2 538.0 229.2 538.2 228.4Z" fill="url(#rg)"/><path d="M543.7 223.2C543.6 224.2 542.7 226.4 543.2 229.1C543.7 231.8 546.2 235.7 546.6 239.4C547.0 243.1 546.5 247.3 545.9 251.2C545.3 255.1 543.9 258.2 542.9 262.9C541.9 267.5 540.5 276.4 540.0 279.1C541.9 279.1 549.6 279.1 551.5 279.1C551.2 276.9 550.1 270.1 550.0 265.9C549.9 261.7 550.6 257.8 550.6 254.1C550.6 250.4 550.4 246.7 550.0 243.8C549.6 240.9 548.9 238.9 548.1 236.5C547.3 234.1 545.8 231.3 545.1 229.1C544.4 226.9 543.9 224.2 543.7 223.2Z" fill="url(#rg)"/><path d="M553.2 232.8C554.4 233.5 558.2 235.1 560.6 237.2C563.0 239.3 565.7 242.5 567.9 245.3C570.1 248.1 571.8 251.7 573.8 254.1C575.8 256.6 577.7 258.4 579.7 260.0C581.7 261.6 584.6 263.1 585.6 263.7C584.7 264.3 581.3 266.8 580.4 267.4C579.1 266.6 574.8 264.6 572.6 262.6C570.4 260.6 568.8 258.1 567.0 255.2C565.2 252.3 563.7 248.0 562.0 245.0C560.3 242.0 558.5 239.4 557.0 237.4C555.5 235.4 553.8 233.6 553.2 232.8Z" fill="url(#rg3)"/><path d="M469.1 170.4C469.1 171.6 469.1 174.8 468.9 177.7C468.7 180.5 468.3 184.2 467.9 187.5C467.5 190.8 466.6 194.4 466.3 197.4C466.0 200.4 466.1 204.3 466.0 205.7C466.7 204.5 469.1 200.7 470.4 198.3C471.7 195.9 473.1 193.2 473.8 191.5C474.5 189.8 474.4 188.8 474.5 188.3C474.9 189.0 476.4 190.8 476.8 192.5C477.2 194.2 477.4 196.0 477.1 198.3C476.9 200.6 476.2 203.2 475.3 206.2C474.4 209.1 472.4 213.2 471.4 216.0C470.4 218.8 469.7 220.4 469.4 222.8C469.1 225.2 469.0 228.1 469.4 230.7C469.8 233.3 470.6 235.7 472.0 238.5C473.4 241.3 476.0 244.9 477.9 247.7C479.8 250.5 481.1 253.3 483.1 255.5C485.1 257.7 487.3 259.2 489.7 260.8C492.1 262.4 496.2 264.3 497.5 265.0C496.6 263.9 493.8 260.1 492.3 258.1C490.8 256.1 489.8 255.0 488.4 252.9C487.0 250.8 484.6 246.9 483.8 245.7C485.2 245.9 489.8 246.0 492.3 247.0C494.8 248.0 496.9 249.8 498.8 251.6C500.8 253.4 502.2 255.7 504.0 258.1C505.8 260.5 508.0 264.2 509.3 266.0C510.6 267.8 510.3 267.6 512.0 268.8C513.7 270.0 516.2 271.7 519.4 273.2C522.6 274.7 527.8 276.6 531.2 277.6C534.6 278.6 537.1 278.9 540.0 279.4C542.9 279.8 547.3 280.1 548.8 280.3C549.3 280.3 551.5 280.3 552.0 280.3C552.0 281.5 552.0 286.3 552.0 287.5C551.0 287.5 548.9 287.6 545.9 287.3C542.9 287.0 538.4 286.4 534.0 285.6C529.6 284.8 524.2 283.6 519.4 282.3C514.6 281.0 508.6 279.0 505.0 277.8C501.4 276.6 501.1 276.7 497.5 275.4C493.9 274.1 487.7 272.0 483.1 269.9C478.5 267.8 473.7 265.3 470.0 262.7C466.3 260.1 463.2 256.9 460.9 254.2C458.6 251.5 457.4 248.8 456.3 246.4C455.2 244.0 454.7 240.9 454.4 239.8C455.3 240.6 457.9 242.8 460.0 244.5C462.1 246.2 465.7 249.1 466.8 250.0C465.6 248.3 461.7 242.8 459.6 239.8C457.5 236.8 456.0 234.8 454.4 232.0C452.8 229.2 451.1 225.5 449.8 222.8C448.5 220.1 447.2 218.8 446.4 216.0C445.6 213.2 444.9 209.3 444.9 206.2C444.9 203.1 445.6 200.0 446.4 197.4C447.2 194.8 448.4 192.2 449.8 190.5C451.2 188.8 453.9 187.9 454.7 187.4C454.4 188.6 453.6 191.6 453.2 194.4C452.8 197.2 452.1 201.1 452.0 204.2C451.9 207.3 452.1 210.2 452.7 213.0C453.3 215.8 454.5 218.7 455.7 220.9C456.9 223.1 459.1 225.2 459.8 226.0C459.9 225.1 460.3 222.4 460.2 220.5C460.1 218.6 459.4 216.6 459.0 214.5C458.6 212.4 458.2 210.2 458.1 208.0C458.0 205.8 458.0 203.9 458.3 201.3C458.6 198.7 459.3 195.4 460.1 192.5C460.9 189.6 462.0 186.5 463.0 183.6C464.0 180.7 465.0 177.0 466.0 174.8C467.0 172.6 468.6 171.1 469.1 170.4Z" fill="#2a2627"/><g transform="translate(0 270) scale(1 1.025) translate(0 -270) translate(1094.6 0) scale(-1 1)"><path d="M469.1 170.4C469.1 171.6 469.1 174.8 468.9 177.7C468.7 180.5 468.3 184.2 467.9 187.5C467.5 190.8 466.6 194.4 466.3 197.4C466.0 200.4 466.1 204.3 466.0 205.7C466.7 204.5 469.1 200.7 470.4 198.3C471.7 195.9 473.1 193.2 473.8 191.5C474.5 189.8 474.4 188.8 474.5 188.3C474.9 189.0 476.4 190.8 476.8 192.5C477.2 194.2 477.4 196.0 477.1 198.3C476.9 200.6 476.2 203.2 475.3 206.2C474.4 209.1 472.4 213.2 471.4 216.0C470.4 218.8 469.7 220.4 469.4 222.8C469.1 225.2 469.0 228.1 469.4 230.7C469.8 233.3 470.6 235.7 472.0 238.5C473.4 241.3 476.0 244.9 477.9 247.7C479.8 250.5 481.1 253.3 483.1 255.5C485.1 257.7 487.3 259.2 489.7 260.8C492.1 262.4 496.2 264.3 497.5 265.0C496.6 263.9 493.8 260.1 492.3 258.1C490.8 256.1 489.8 255.0 488.4 252.9C487.0 250.8 484.6 246.9 483.8 245.7C485.2 245.9 489.8 246.0 492.3 247.0C494.8 248.0 496.9 249.8 498.8 251.6C500.8 253.4 502.2 255.7 504.0 258.1C505.8 260.5 508.0 264.2 509.3 266.0C510.6 267.8 510.3 267.6 512.0 268.8C513.7 270.0 516.2 271.7 519.4 273.2C522.6 274.7 527.8 276.6 531.2 277.6C534.6 278.6 537.1 278.9 540.0 279.4C542.9 279.8 547.3 280.1 548.8 280.3C549.3 280.3 551.5 280.3 552.0 280.3C552.0 281.5 552.0 286.3 552.0 287.5C551.0 287.5 548.9 287.6 545.9 287.3C542.9 287.0 538.4 286.4 534.0 285.6C529.6 284.8 524.2 283.6 519.4 282.3C514.6 281.0 508.6 279.0 505.0 277.8C501.4 276.6 501.1 276.7 497.5 275.4C493.9 274.1 487.7 272.0 483.1 269.9C478.5 267.8 473.7 265.3 470.0 262.7C466.3 260.1 463.2 256.9 460.9 254.2C458.6 251.5 457.4 248.8 456.3 246.4C455.2 244.0 454.7 240.9 454.4 239.8C455.3 240.6 457.9 242.8 460.0 244.5C462.1 246.2 465.7 249.1 466.8 250.0C465.6 248.3 461.7 242.8 459.6 239.8C457.5 236.8 456.0 234.8 454.4 232.0C452.8 229.2 451.1 225.5 449.8 222.8C448.5 220.1 447.2 218.8 446.4 216.0C445.6 213.2 444.9 209.3 444.9 206.2C444.9 203.1 445.6 200.0 446.4 197.4C447.2 194.8 448.4 192.2 449.8 190.5C451.2 188.8 453.9 187.9 454.7 187.4C454.4 188.6 453.6 191.6 453.2 194.4C452.8 197.2 452.1 201.1 452.0 204.2C451.9 207.3 452.1 210.2 452.7 213.0C453.3 215.8 454.5 218.7 455.7 220.9C456.9 223.1 459.1 225.2 459.8 226.0C459.9 225.1 460.3 222.4 460.2 220.5C460.1 218.6 459.4 216.6 459.0 214.5C458.6 212.4 458.2 210.2 458.1 208.0C458.0 205.8 458.0 203.9 458.3 201.3C458.6 198.7 459.3 195.4 460.1 192.5C460.9 189.6 462.0 186.5 463.0 183.6C464.0 180.7 465.0 177.0 466.0 174.8C467.0 172.6 468.6 171.1 469.1 170.4Z" fill="#2a2627"/></g><path d="M501.8 254.1 L509.1 247.5 L519.4 241.6 L525.3 233.5 L530.4 228.4 L533.4 229.1 L537.8 224.7 L541.5 221.0 L544.7 219.1 L548.1 221.8 L551.8 226.2 L559.1 232.1 L567.9 239.4 L578.2 246.8 L587.1 252.6 L591.5 254.9" fill="none" stroke="#3a3a3a" stroke-width="0.55" stroke-linejoin="round"/><ellipse cx="548.5" cy="285" rx="2.3" ry="4.3" fill="#050505"/><mask id="tm" maskUnits="userSpaceOnUse" x="430" y="285" width="240" height="45"><text x="441.9" y="316.05" font-family="'Liberation Sans','DejaVu Sans',sans-serif" font-weight="700" font-size="30.7" textLength="209" lengthAdjust="spacingAndGlyphs" fill="#fff" stroke="#fff" stroke-width="0.5">DEER DESIGN</text></mask><g mask="url(#tm)" stroke-linejoin="miter"><text x="441.9" y="316.05" font-family="'Liberation Sans','DejaVu Sans',sans-serif" font-weight="700" font-size="30.7" textLength="209" lengthAdjust="spacingAndGlyphs" fill="#fff" stroke="#000" stroke-width="3.8">DEER DESIGN</text><text x="441.9" y="316.05" font-family="'Liberation Sans','DejaVu Sans',sans-serif" font-weight="700" font-size="30.7" textLength="209" lengthAdjust="spacingAndGlyphs" fill="none" stroke="#fff" stroke-width="2.3">DEER DESIGN</text><text x="441.9" y="316.05" font-family="'Liberation Sans','DejaVu Sans',sans-serif" font-weight="700" font-size="30.7" textLength="209" lengthAdjust="spacingAndGlyphs" fill="none" stroke="#000" stroke-width="1.0">DEER DESIGN</text></g></svg>
<div class="t" style="left:889.00px;top:47.20px;font-size:9.2px;color:#e4e4e4;transform:scaleX(0.8964);transform-origin:0 50%;">Preview</div>
<div class="a" style="left:926.30px;top:51.00px;width:6.10px;height:0.80px;background:#a8a8a8;"></div>
<div class="a" style="left:926.30px;top:53.70px;width:6.10px;height:0.80px;background:#a8a8a8;"></div>
<div class="a" style="left:926.30px;top:56.40px;width:6.10px;height:0.80px;background:#a8a8a8;"></div>
<svg style="left:915.20px;top:69.30px;" width="10" height="7.6" viewBox="0 0 10 7.6"><rect x="0" y="0" width="1.2" height="7.6" fill="#c4c4c4"/><path d="M9.9 0 L9.9 7.6 L2.6 3.8 Z" fill="#c4c4c4"/></svg>
<svg style="left:932.70px;top:69.30px;" width="9.6" height="7.6" viewBox="0 0 9.6 7.6"><path d="M6.6 0 L6.6 7.6 L0 3.8 Z" fill="#c4c4c4"/><rect x="8.2" y="0" width="1.2" height="7.6" fill="#c4c4c4"/></svg>
<svg style="left:952.50px;top:69.30px;" width="7.2" height="7.6" viewBox="0 0 7.2 7.6"><path d="M0 0 L7.2 3.8 L0 7.6 Z" fill="#c4c4c4"/></svg>
<svg style="left:969.80px;top:69.30px;" width="9.6" height="7.6" viewBox="0 0 9.6 7.6"><rect x="0" y="0" width="1.2" height="7.6" fill="#c4c4c4"/><path d="M2.8 0 L9.4 3.8 L2.8 7.6 Z" fill="#c4c4c4"/></svg>
<svg style="left:987.90px;top:69.30px;" width="10" height="7.6" viewBox="0 0 10 7.6"><path d="M0 0 L7.3 3.8 L0 7.6 Z" fill="#c4c4c4"/><rect x="8.7" y="0" width="1.2" height="7.6" fill="#c4c4c4"/></svg>
<div class="a" style="left:880.00px;top:84.20px;width:144.00px;height:2.80px;background:#1e1e1e;"></div>
<div class="t" style="left:889.00px;top:89.70px;font-size:9.2px;color:#e4e4e4;transform:scaleX(0.8983);transform-origin:0 50%;">Properties: No Selection</div>
<div class="a" style="left:997.20px;top:93.60px;width:6.50px;height:0.80px;background:#a8a8a8;"></div>
<div class="a" style="left:997.20px;top:96.30px;width:6.50px;height:0.80px;background:#a8a8a8;"></div>
<div class="a" style="left:997.20px;top:99.00px;width:6.50px;height:0.80px;background:#a8a8a8;"></div>
<div class="a" style="left:880.00px;top:122.55px;width:131.00px;height:1.10px;background:#272727;"></div>
<div class="t" style="left:889.00px;top:126.80px;font-size:9.2px;color:#e4e4e4;transform:scaleX(0.9101);transform-origin:0 50%;">Align</div>
<div class="a" style="left:997.20px;top:130.70px;width:6.50px;height:0.80px;background:#a8a8a8;"></div>
<div class="a" style="left:997.20px;top:133.40px;width:6.50px;height:0.80px;background:#a8a8a8;"></div>
<div class="a" style="left:997.20px;top:136.10px;width:6.50px;height:0.80px;background:#a8a8a8;"></div>
<div class="t" style="left:884.70px;top:151.10px;font-size:9.2px;color:#d6d6d6;transform:scaleX(0.8890);transform-origin:0 50%;">Align Layers to:</div>
<div class="a" style="left:946.50px;top:148.60px;width:64.50px;height:18.20px;background:#3f3f3f;border-radius:3px 0 0 3px"></div>
<div class="t" style="left:953.50px;top:151.10px;font-size:9.2px;color:#7c7c7c;transform:scaleX(0.8943);transform-origin:0 50%;">Selection</div>
<svg style="left:888.20px;top:175.80px;" width="10.6" height="12" viewBox="0 0 10.6 12"><rect x="0" y="0" width="0.9" height="12" fill="#8c8c8c"/><rect x="2" y="1.6" width="5" height="3.6" fill="#8c8c8c"/><rect x="2" y="6.8" width="8.4" height="3.6" fill="#8c8c8c"/></svg>
<svg style="left:914.60px;top:175.80px;" width="9" height="12" viewBox="0 0 9 12"><rect x="4.05" y="0" width="0.9" height="12" fill="#8c8c8c"/><rect x="2" y="1.6" width="5" height="3.6" fill="#8c8c8c"/><rect x="0.2" y="6.8" width="8.6" height="3.6" fill="#8c8c8c"/></svg>
<svg style="left:940.40px;top:175.80px;" width="10.6" height="12" viewBox="0 0 10.6 12"><rect x="9.7" y="0" width="0.9" height="12" fill="#8c8c8c"/><rect x="3.6" y="1.6" width="5" height="3.6" fill="#8c8c8c"/><rect x="0.2" y="6.8" width="8.4" height="3.6" fill="#8c8c8c"/></svg>
<svg style="left:965.00px;top:175.80px;" width="12" height="11" viewBox="0 0 12 11"><rect x="0" y="0" width="12" height="0.9" fill="#8c8c8c"/><rect x="2" y="2" width="3.6" height="8.6" fill="#8c8c8c"/><rect x="7" y="2" width="3.6" height="5" fill="#8c8c8c"/></svg>
<svg style="left:990.80px;top:176.60px;" width="12" height="9.4" viewBox="0 0 12 9.4"><rect x="0" y="4.25" width="12" height="0.9" fill="#8c8c8c"/><rect x="2" y="0.2" width="3.6" height="9" fill="#8c8c8c"/><rect x="7" y="1.6" width="3.6" height="6" fill="#8c8c8c"/></svg>
<div class="a" style="left:884.50px;top:196.95px;width:126.50px;height:0.90px;background:#404040;"></div>
<div class="t" style="left:884.70px;top:204.10px;font-size:9.2px;color:#d6d6d6;transform:scaleX(0.8881);transform-origin:0 50%;">Distribute Layers:</div>
<div class="a" style="left:880.00px;top:216.85px;width:131.00px;height:1.10px;background:#272727;"></div>
<div class="t" style="left:889.00px;top:221.50px;font-size:9.2px;color:#e4e4e4;transform:scaleX(0.9149);transform-origin:0 50%;">Audio</div>
<div class="a" style="left:997.20px;top:225.40px;width:6.50px;height:0.80px;background:#a8a8a8;"></div>
<div class="a" style="left:997.20px;top:228.10px;width:6.50px;height:0.80px;background:#a8a8a8;"></div>
<div class="a" style="left:997.20px;top:230.80px;width:6.50px;height:0.80px;background:#a8a8a8;"></div>
<div class="a" style="left:889.80px;top:247.70px;width:6.80px;height:112.20px;background:#1d1d1d;"></div>
<div class="a" style="left:897.40px;top:247.70px;width:6.80px;height:112.20px;background:#1d1d1d;"></div>
<div class="a" style="left:889.80px;top:247.70px;width:6.80px;height:5.80px;background:#292929;"></div>
<div class="a" style="left:897.40px;top:247.70px;width:6.80px;height:5.80px;background:#292929;"></div>
<div class="a" style="left:889.80px;top:358.90px;width:6.80px;height:1.00px;background:#c4c422;"></div>
<div class="a" style="left:897.40px;top:358.90px;width:6.80px;height:1.00px;background:#c4c422;"></div>
<div class="t" style="left:914.20px;top:245.40px;font-size:8.3px;color:#dcdcdc;transform:scaleX(0.8660);transform-origin:0 50%;">0.0</div>
<div class="t" style="left:912.70px;top:258.70px;font-size:8.3px;color:#dcdcdc;transform:scaleX(0.8603);transform-origin:0 50%;">-3.0</div>
<div class="t" style="left:912.70px;top:272.30px;font-size:8.3px;color:#dcdcdc;transform:scaleX(0.8603);transform-origin:0 50%;">-6.0</div>
<div class="t" style="left:912.70px;top:285.90px;font-size:8.3px;color:#dcdcdc;transform:scaleX(0.8603);transform-origin:0 50%;">-9.0</div>
<div class="t" style="left:912.70px;top:299.40px;font-size:8.3px;color:#dcdcdc;transform:scaleX(0.8509);transform-origin:0 50%;">-12.0</div>
<div class="t" style="left:912.70px;top:313.20px;font-size:8.3px;color:#dcdcdc;transform:scaleX(0.8509);transform-origin:0 50%;">-15.0</div>
<div class="t" style="left:912.70px;top:326.80px;font-size:8.3px;color:#dcdcdc;transform:scaleX(0.8509);transform-origin:0 50%;">-18.0</div>
<div class="t" style="left:912.70px;top:340.40px;font-size:8.3px;color:#dcdcdc;transform:scaleX(0.8509);transform-origin:0 50%;">-21.0</div>
<div class="t" style="left:912.70px;top:352.20px;font-size:8.3px;color:#dcdcdc;transform:scaleX(0.8509);transform-origin:0 50%;">-24.0</div>
<div class="a" style="left:949.70px;top:252.40px;width:1.00px;height:38.70px;background:#585858;"></div>
<div class="a" style="left:949.70px;top:304.30px;width:1.00px;height:41.40px;background:#585858;"></div>
<div class="a" style="left:945.40px;top:292.70px;width:9.60px;height:9.60px;background:transparent;border-radius:50%;border:1px solid #6c6c6c"></div>
<div class="a" style="left:967.40px;top:254.80px;width:1.00px;height:34.10px;background:#585858;"></div>
<div class="a" style="left:967.40px;top:302.10px;width:1.00px;height:40.60px;background:#585858;"></div>
<div class="a" style="left:963.10px;top:290.50px;width:9.60px;height:9.60px;background:transparent;border-radius:50%;border:1px solid #6c6c6c"></div>
<div class="a" style="left:985.30px;top:252.40px;width:1.00px;height:38.70px;background:#585858;"></div>
<div class="a" style="left:985.30px;top:304.30px;width:1.00px;height:41.40px;background:#585858;"></div>
<div class="a" style="left:981.00px;top:292.70px;width:9.60px;height:9.60px;background:transparent;border-radius:50%;border:1px solid #6c6c6c"></div>
<div class="t" style="left:949.00px;top:351.80px;font-size:8.3px;color:#686868;transform:scaleX(0.9946);transform-origin:0 50%;">0</div>
<div class="t" style="left:984.20px;top:351.80px;font-size:8.3px;color:#686868;transform:scaleX(0.9946);transform-origin:0 50%;">0</div>
<div class="a" style="left:990px;top:240px;width:21px;height:120px;overflow:hidden">
<div class="t" style="left:7.50px;top:4.60px;font-size:8.3px;color:#dcdcdc;transform:scaleX(0.8727);transform-origin:0 50%;">12.0</div>
<div class="t" style="left:7.50px;top:17.20px;font-size:8.3px;color:#dcdcdc;transform:scaleX(0.8574);transform-origin:0 50%;">9.0</div>
<div class="t" style="left:7.50px;top:29.90px;font-size:8.3px;color:#dcdcdc;transform:scaleX(0.8574);transform-origin:0 50%;">6.0</div>
<div class="t" style="left:7.50px;top:42.80px;font-size:8.3px;color:#dcdcdc;transform:scaleX(0.8574);transform-origin:0 50%;">3.0</div>
<div class="t" style="left:7.50px;top:53.70px;font-size:8.3px;color:#dcdcdc;transform:scaleX(0.9125);transform-origin:0 50%;">0.0 dB</div>
<div class="t" style="left:5.40px;top:67.30px;font-size:8.3px;color:#dcdcdc;transform:scaleX(0.8533);transform-origin:0 50%;">-3.0</div>
<div class="t" style="left:5.40px;top:79.20px;font-size:8.3px;color:#dcdcdc;transform:scaleX(0.8533);transform-origin:0 50%;">-6.0</div>
<div class="t" style="left:5.40px;top:91.10px;font-size:8.3px;color:#dcdcdc;transform:scaleX(0.8533);transform-origin:0 50%;">-9.0</div>
<div class="t" style="left:5.40px;top:101.10px;font-size:8.3px;color:#dcdcdc;transform:scaleX(0.8562);transform-origin:0 50%;">-12.0</div>
</div>
<div class="a" style="left:880.00px;top:368.75px;width:131.00px;height:1.50px;background:#232323;"></div>
<div class="t" style="left:889.00px;top:373.90px;font-size:9.2px;color:#e4e4e4;transform:scaleX(0.8706);transform-origin:0 50%;">Effects &amp; Presets</div>
<div class="a" style="left:997.20px;top:377.80px;width:6.50px;height:0.80px;background:#a8a8a8;"></div>
<div class="a" style="left:997.20px;top:380.50px;width:6.50px;height:0.80px;background:#a8a8a8;"></div>
<div class="a" style="left:997.20px;top:383.20px;width:6.50px;height:0.80px;background:#a8a8a8;"></div>
<div class="a" style="left:884.70px;top:391.80px;width:123.00px;height:13.50px;background:#222222;border-radius:2.5px;border:0.6px solid #3a3a3a"></div>
<svg style="left:889.20px;top:394.10px;" width="12.6" height="9" viewBox="0 0 12.6 9"><circle cx="3.3" cy="3.4" r="2.7" fill="none" stroke="#b0b0b0" stroke-width="0.9"/><path d="M5.3 5.5 L7.4 8" stroke="#b0b0b0" stroke-width="1"/><path d="M8 4.6 L9.8 6.4 L11.8 4.4" fill="none" stroke="#b0b0b0" stroke-width="0.8"/></svg>
<div class="a" style="left:880.00px;top:407.75px;width:131.00px;height:0.90px;background:#2a2a2a;"></div>
<svg style="left:995.80px;top:413.50px;" width="9.6" height="9.6" viewBox="0 0 9.6 9.6"><path d="M0 0 L9.6 0 L9.6 9.6 L4 9.6 L0 5.6 Z" fill="#cecece"/><path d="M0.4 5.4 L4.2 5.4 L4.2 9.2" fill="none" stroke="#555" stroke-width="0.9"/></svg>
<div class="a" style="left:880.00px;top:427.90px;width:131.00px;height:1.80px;background:#202020;"></div>
<div class="t" style="left:889.00px;top:432.80px;font-size:9.2px;color:#e4e4e4;transform:scaleX(0.8690);transform-origin:0 50%;">Brushes</div>
<div class="a" style="left:880.00px;top:447.40px;width:131.00px;height:1.80px;background:#202020;"></div>
<div class="t" style="left:889.00px;top:452.50px;font-size:9.2px;color:#e4e4e4;transform:scaleX(0.9068);transform-origin:0 50%;">Paint</div>
<div class="a" style="left:880.00px;top:467.10px;width:131.00px;height:1.80px;background:#202020;"></div>
<div class="a" style="left:0.80px;top:434.80px;width:876.60px;height:177.20px;background:#323232;border:1.3px solid #4573b2;border-top-width:1.7px"></div>
<svg style="left:9.00px;top:443.60px;" width="3.6" height="3.6" viewBox="0 0 3.6 3.6"><path d="M0.3 0.3 L3.3 3.3 M3.3 0.3 L0.3 3.3" stroke="#b4b4b4" stroke-width="0.8"/></svg>
<div class="a" style="left:20.50px;top:440.50px;width:7.60px;height:7.60px;background:#b5a283;"></div>
<div class="t" style="left:36.80px;top:438.40px;font-size:9.2px;color:#e2e2e2;transform:scaleX(0.8799);transform-origin:0 50%;">deer-design1</div>
<div class="a" style="left:92.50px;top:442.50px;width:6.50px;height:0.80px;background:#a8a8a8;"></div>
<div class="a" style="left:92.50px;top:445.00px;width:6.50px;height:0.80px;background:#a8a8a8;"></div>
<div class="a" style="left:92.50px;top:447.50px;width:6.50px;height:0.80px;background:#a8a8a8;"></div>
<div class="t" style="left:10.50px;top:455.60px;font-size:13.2px;color:#5a9cf0;transform:scaleX(0.8742);transform-origin:0 50%;-webkit-text-stroke:0.35px #5a9cf0;">0;00;03;05</div>
<div class="t" style="left:9.00px;top:466.90px;font-size:8px;color:#2f6dc6;transform:scaleX(0.9327);transform-origin:0 50%;">00095 (29.97 fps)</div>
<div class="a" style="left:76.50px;top:459.60px;width:152.40px;height:13.40px;background:#222222;border-radius:2.5px;border:0.6px solid #3a3a3a"></div>
<svg style="left:82.00px;top:462.10px;" width="12.6" height="9" viewBox="0 0 12.6 9"><circle cx="3.3" cy="3.4" r="2.7" fill="none" stroke="#b0b0b0" stroke-width="0.9"/><path d="M5.3 5.5 L7.4 8" stroke="#b0b0b0" stroke-width="1"/><path d="M8 4.6 L9.8 6.4 L11.8 4.4" fill="none" stroke="#b0b0b0" stroke-width="0.8"/></svg>
<svg style="left:239.00px;top:463.00px;" width="12.4" height="9.2" viewBox="0 0 12.4 9.2"><rect x="0.4" y="0.4" width="3.4" height="2.4" fill="#c6c6c6"/><rect x="7.6" y="0.2" width="3.6" height="2.6" fill="#c6c6c6"/><rect x="7.6" y="4" width="3.6" height="2.6" fill="#c6c6c6"/><path d="M3.6 1.6 L7.6 1.6 M5.6 1.6 L5.6 5.3 L7.6 5.3" fill="none" stroke="#c6c6c6" stroke-width="0.8"/><path d="M9.6 7.6 L12.2 7.6 L10.9 9 Z" fill="#c6c6c6"/></svg>
<svg style="left:256.90px;top:462.20px;" width="12.2" height="9.6" viewBox="0 0 12.2 9.6"><path d="M1.6 4.6 Q6.1 -1.6 10.6 4.6" fill="none" stroke="#c6c6c6" stroke-width="1.2"/><rect x="5.3" y="1" width="1.6" height="7.6" fill="#c6c6c6"/><rect x="0" y="4.6" width="12.2" height="5" fill="#707070"/><rect x="0" y="4.4" width="12.2" height="1" fill="#c6c6c6"/></svg>
<svg style="left:275.60px;top:462.00px;" width="11.4" height="10.6" viewBox="0 0 11.4 10.6"><rect x="3.4" y="0" width="8" height="7.4" fill="#9a9a9a"/><path d="M5 2 h4.8 M5 5 h4.8" stroke="#3a3a3a" stroke-width="1"/><path d="M1.8 2 L1.8 9 L9.4 9 M0.4 3.6 L0.4 10.2 L7.8 10.2" fill="none" stroke="#c6c6c6" stroke-width="0.9"/></svg>
<svg style="left:294.00px;top:462.20px;" width="11.4" height="10" viewBox="0 0 11.4 10"><circle cx="7.4" cy="3.8" r="3.3" fill="none" stroke="#c6c6c6" stroke-width="0.95"/><circle cx="5.8" cy="5" r="3.3" fill="none" stroke="#c6c6c6" stroke-width="0.85"/><circle cx="4.2" cy="6.2" r="3.3" fill="none" stroke="#c6c6c6" stroke-width="0.8"/></svg>
<svg style="left:311.90px;top:461.80px;" width="12.2" height="10.8" viewBox="0 0 12.2 10.8"><rect x="0.5" y="1.8" width="11.2" height="8.5" fill="none" stroke="#c6c6c6" stroke-width="1"/><path d="M4 0 v1.8 M6.8 0.6 v1.2 M9.4 0 v1.8" stroke="#c6c6c6" stroke-width="0.9"/><path d="M1.6 3.6 Q4.4 3.6 6 6 Q7.8 8.6 10.4 8.6" fill="none" stroke="#c6c6c6" stroke-width="0.9"/></svg>
<div class="a" style="left:2.30px;top:480.20px;width:332.00px;height:0.90px;background:#262626;"></div>
<svg style="left:6.00px;top:485.40px;" width="8" height="5.6" viewBox="0 0 8 5.6"><path d="M0 2.8 Q4 -1.6 8 2.8 Q4 7.2 0 2.8 Z M4 1 A1.8 1.8 0 1 0 4.01 1 Z" fill="#d0d0d0" fill-rule="evenodd"/><circle cx="4" cy="2.8" r="0.9" fill="#d0d0d0"/></svg>
<svg style="left:17.00px;top:484.00px;" width="9" height="8.6" viewBox="0 0 9 8.6"><path d="M0 2.8 L2 2.8 L4.4 0.4 L4.4 8.2 L2 5.8 L0 5.8 Z" fill="#d0d0d0"/><path d="M5.6 2.4 Q7 4.3 5.6 6.2 M6.8 1 Q9.2 4.3 6.8 7.6" fill="none" stroke="#d0d0d0" stroke-width="0.9"/></svg>
<div class="a" style="left:30.00px;top:485.60px;width:5.40px;height:5.40px;background:#d0d0d0;border-radius:50%"></div>
<svg style="left:40.10px;top:483.80px;" width="7.4" height="8.2" viewBox="0 0 7.4 8.2"><path d="M1.6 3.8 L1.6 2.4 Q1.7 0.5 3.7 0.5 Q5.7 0.5 5.8 2.4 L5.8 3.8" fill="none" stroke="#d0d0d0" stroke-width="1"/><rect x="0.2" y="3.6" width="7" height="4.6" fill="#d0d0d0"/><rect x="3.2" y="5" width="1" height="1.8" fill="#323232"/></svg>
<div class="a" style="left:51.90px;top:483.60px;width:1.20px;height:9.00px;background:#262626;"></div>
<svg style="left:62.90px;top:483.60px;" width="9.4" height="9" viewBox="0 0 9.4 9"><path d="M0.2 0.6 L4.2 0.2 L9.2 5.2 L5.2 9 L0.4 4.2 Z M2 1.4 A0.9 0.9 0 1 0 2.01 1.4 Z" fill="#d0d0d0" fill-rule="evenodd"/></svg>
<div class="a" style="left:75.90px;top:483.60px;width:1.20px;height:9.00px;background:#262626;"></div>
<div class="t" style="left:81.00px;top:481.40px;font-size:8.3px;color:#c0c0c0;transform:scaleX(0.8649);transform-origin:0 50%;">#</div>
<div class="a" style="left:101.20px;top:483.60px;width:1.20px;height:9.00px;background:#262626;"></div>
<div class="t" style="left:106.00px;top:481.50px;font-size:8.4px;color:#c4c4c4;transform:scaleX(0.8132);transform-origin:0 50%;">Layer Name</div>
<div class="a" style="left:214.40px;top:483.60px;width:1.20px;height:9.00px;background:#262626;"></div>
<div class="a" style="left:320.70px;top:483.60px;width:1.20px;height:9.00px;background:#262626;"></div>
<svg style="left:220.00px;top:484.40px;" width="8.8" height="7.8" viewBox="0 0 8.8 7.8"><path d="M2 4.3 L2 3.2 Q2.2 0.5 4.4 0.5 Q6.6 0.5 6.8 3.2 L6.8 4.3" fill="none" stroke="#d0d0d0" stroke-width="0.9"/><path d="M0 4.7 L8.8 4.7" stroke="#d0d0d0" stroke-width="0.75"/><path d="M3.4 2.4 L3.4 7 M5.4 2.4 L5.4 7 M2.2 7.1 L3.9 7.1 M4.9 7.1 L6.6 7.1" stroke="#d0d0d0" stroke-width="0.8"/></svg>
<svg style="left:231.40px;top:484.20px;" width="8.4" height="8.4" viewBox="0 0 8.4 8.4"><circle cx="4.2" cy="4.2" r="1.7" fill="none" stroke="#d0d0d0" stroke-width="0.9"/><path d="M4.2 0 v1.7 M4.2 6.7 v1.7 M0 4.2 h1.7 M6.7 4.2 h1.7 M1.2 1.2 l1.2 1.2 M6 6 l1.2 1.2 M7.2 1.2 l-1.2 1.2 M1.2 7.2 l1.2 -1.2" stroke="#d0d0d0" stroke-width="0.8"/></svg>
<svg style="left:242.60px;top:484.00px;" width="8.4" height="8.4" viewBox="0 0 8.4 8.4"><path d="M0.6 0.6 L7.8 7.8" stroke="#d0d0d0" stroke-width="1"/><circle cx="1" cy="1" r="0.9" fill="#d0d0d0"/><circle cx="7.4" cy="7.4" r="0.9" fill="#d0d0d0"/></svg>
<div class="t" style="left:253.80px;top:480.60px;font-size:10.6px;color:#d0d0d0;font-family:'Liberation Serif','DejaVu Serif',serif;transform:scaleX(1.1755);transform-origin:0 50%;font-style:italic;">fx</div>
<svg style="left:265.00px;top:484.20px;" width="8.8" height="8.2" viewBox="0 0 8.8 8.2"><rect x="0" y="0" width="8.8" height="8.2" fill="#a8a8a8"/><rect x="1.8" y="1.4" width="5.2" height="5.4" fill="#d8d8d8"/><path d="M2.4 3.4 h4" stroke="#444" stroke-width="1"/></svg>
<svg style="left:276.40px;top:483.20px;" width="10" height="10" viewBox="0 0 10 10"><circle cx="6.2" cy="3.6" r="3.2" fill="#8a8a8a" stroke="#d0d0d0" stroke-width="0.7"/><ellipse cx="3.8" cy="6.2" rx="3.8" ry="2.4" transform="rotate(-40 3.8 6.2)" fill="none" stroke="#d0d0d0" stroke-width="0.8"/></svg>
<svg style="left:288.60px;top:484.40px;" width="7.8" height="7.8" viewBox="0 0 7.8 7.8"><circle cx="3.9" cy="3.9" r="3.4" fill="none" stroke="#d0d0d0" stroke-width="0.9"/><path d="M1.5 6.3 A3.4 3.4 0 0 0 6.3 1.5 Z" fill="#d0d0d0"/></svg>
<svg style="left:300.00px;top:484.80px;" width="8" height="7" viewBox="0 0 8 7"><path d="M0.5 2 L4 0.5 L7.5 2 L7.5 5 L4 6.5 L0.5 5 Z M0.5 2 L4 3.4 L7.5 2 M4 3.4 L4 6.5" fill="none" stroke="#d0d0d0" stroke-width="0.8"/></svg>
<div class="a" style="left:2.30px;top:495.40px;width:331.80px;height:11.80px;background:#464646;"></div>
<div class="a" style="left:5.00px;top:496.60px;width:9.20px;height:9.60px;background:#262626;"></div>
<svg style="left:5.60px;top:498.50px;" width="8" height="5.6" viewBox="0 0 8 5.6"><path d="M0 2.8 Q4 -1.6 8 2.8 Q4 7.2 0 2.8 Z M4 1 A1.8 1.8 0 1 0 4.01 1 Z" fill="#e6e6e6" fill-rule="evenodd"/><circle cx="4" cy="2.8" r="0.9" fill="#e6e6e6"/></svg>
<div class="a" style="left:28.10px;top:497.00px;width:8.20px;height:8.40px;background:#262626;"></div>
<div class="a" style="left:39.50px;top:497.00px;width:8.30px;height:8.40px;background:#262626;"></div>
<svg style="left:56.90px;top:498.10px;" width="4.0" height="6.4" viewBox="0 0 4 6.4"><path d="M0.5 0.4 L3.4 3.2 L0.5 6" fill="none" stroke="#d8d8d8" stroke-width="1.25"/></svg>
<div class="a" style="left:66.00px;top:496.90px;width:9.10px;height:9.00px;background:#6b7de0;"></div>
<div class="t" style="left:81.90px;top:494.50px;font-size:9.2px;color:#d2d2d2;">1</div>
<svg style="left:104.80px;top:497.10px;" width="8.8" height="8.4" viewBox="0 0 8.8 8.4"><path d="M4.4 0 L5.6 3 L8.8 3.2 L6.3 5.2 L7.1 8.4 L4.4 6.6 L1.7 8.4 L2.5 5.2 L0 3.2 L3.2 3 Z" fill="#dcdcdc"/></svg>
<div class="t" style="left:118.40px;top:494.70px;font-size:9.2px;color:#dadada;transform:scaleX(0.9232);transform-origin:0 50%;">start point circle</div>
<div class="a" style="left:219.80px;top:497.00px;width:8.70px;height:8.20px;background:#262626;"></div>
<svg style="left:219.80px;top:497.50px;" width="8.8" height="7.8" viewBox="0 0 8.8 7.8"><path d="M2 4.3 L2 3.2 Q2.2 0.5 4.4 0.5 Q6.6 0.5 6.8 3.2 L6.8 4.3" fill="none" stroke="#e6e6e6" stroke-width="0.9"/><path d="M0 4.7 L8.8 4.7" stroke="#e6e6e6" stroke-width="0.75"/><path d="M3.4 2.4 L3.4 7 M5.4 2.4 L5.4 7 M2.2 7.1 L3.9 7.1 M4.9 7.1 L6.6 7.1" stroke="#e6e6e6" stroke-width="0.8"/></svg>
<div class="a" style="left:231.00px;top:497.00px;width:8.70px;height:8.20px;background:#3a3a3a;"></div>
<svg style="left:231.20px;top:497.10px;" width="8.4" height="8.4" viewBox="0 0 8.4 8.4"><circle cx="4.2" cy="4.2" r="1.5" fill="none" stroke="#787878" stroke-width="0.9"/><path d="M4.2 0 v1.7 M4.2 6.7 v1.7 M0 4.2 h1.7 M6.7 4.2 h1.7 M1.2 1.2 l1.2 1.2 M6 6 l1.2 1.2 M7.2 1.2 l-1.2 1.2 M1.2 7.2 l1.2 -1.2" stroke="#787878" stroke-width="0.8"/></svg>
<div class="a" style="left:242.30px;top:497.00px;width:8.70px;height:8.20px;background:#262626;"></div>
<svg style="left:242.30px;top:497.00px;" width="8.7" height="8.2" viewBox="0 0 8.7 8.2"><path d="M0.4 7.8 L8.2 0.4" stroke="#dedede" stroke-width="1.1"/></svg>
<div class="a" style="left:276.90px;top:497.00px;width:8.40px;height:8.20px;background:#262626;"></div>
<div class="a" style="left:288.10px;top:497.00px;width:8.40px;height:8.20px;background:#262626;"></div>
<div class="a" style="left:299.40px;top:497.00px;width:8.40px;height:8.20px;background:#262626;"></div>
<div class="a" style="left:2.30px;top:508.28px;width:331.80px;height:11.80px;background:#3d3d3d;"></div>
<div class="a" style="left:5.00px;top:509.48px;width:9.20px;height:9.60px;background:#262626;"></div>
<svg style="left:5.60px;top:511.38px;" width="8" height="5.6" viewBox="0 0 8 5.6"><path d="M0 2.8 Q4 -1.6 8 2.8 Q4 7.2 0 2.8 Z M4 1 A1.8 1.8 0 1 0 4.01 1 Z" fill="#e6e6e6" fill-rule="evenodd"/><circle cx="4" cy="2.8" r="0.9" fill="#e6e6e6"/></svg>
<div class="a" style="left:28.10px;top:509.88px;width:8.20px;height:8.40px;background:#262626;"></div>
<div class="a" style="left:39.50px;top:509.88px;width:8.30px;height:8.40px;background:#262626;"></div>
<svg style="left:56.90px;top:510.98px;" width="4.0" height="6.4" viewBox="0 0 4 6.4"><path d="M0.5 0.4 L3.4 3.2 L0.5 6" fill="none" stroke="#d8d8d8" stroke-width="1.25"/></svg>
<div class="a" style="left:66.00px;top:509.78px;width:9.10px;height:9.00px;background:#b2aad2;"></div>
<div class="t" style="left:81.90px;top:507.38px;font-size:9.2px;color:#d2d2d2;">2</div>
<svg style="left:105.00px;top:509.28px;" width="8.2" height="9.8" viewBox="0 0 8.2 9.8"><path d="M0.4 0.4 L6 0.4 L7.8 2.2 L7.8 9.4 L0.4 9.4 Z" fill="#2e0900" stroke="#9a5412" stroke-width="0.7"/></svg>
<div class="t" style="left:106.50px;top:505.78px;font-size:5px;color:#f5a433;font-weight:700;transform:scaleX(1.0000);transform-origin:0 50%;">Ai</div>
<div class="a" style="left:108.20px;top:516.28px;width:1.80px;height:1.10px;background:#c9a0a0;"></div>
<div class="t" style="left:118.40px;top:507.58px;font-size:9.2px;color:#dadada;transform:scaleX(0.9235);transform-origin:0 50%;">right antler</div>
<div class="a" style="left:219.80px;top:509.88px;width:8.70px;height:8.20px;background:#262626;"></div>
<svg style="left:219.80px;top:510.38px;" width="8.8" height="7.8" viewBox="0 0 8.8 7.8"><path d="M2 4.3 L2 3.2 Q2.2 0.5 4.4 0.5 Q6.6 0.5 6.8 3.2 L6.8 4.3" fill="none" stroke="#e6e6e6" stroke-width="0.9"/><path d="M0 4.7 L8.8 4.7" stroke="#e6e6e6" stroke-width="0.75"/><path d="M3.4 2.4 L3.4 7 M5.4 2.4 L5.4 7 M2.2 7.1 L3.9 7.1 M4.9 7.1 L6.6 7.1" stroke="#e6e6e6" stroke-width="0.8"/></svg>
<div class="a" style="left:231.00px;top:509.88px;width:8.70px;height:8.20px;background:#262626;"></div>
<div class="a" style="left:242.30px;top:509.88px;width:8.70px;height:8.20px;background:#262626;"></div>
<svg style="left:242.30px;top:509.88px;" width="8.7" height="8.2" viewBox="0 0 8.7 8.2"><path d="M0.4 7.8 L8.2 0.4" stroke="#dedede" stroke-width="1.1"/></svg>
<div class="a" style="left:276.90px;top:509.88px;width:8.40px;height:8.20px;background:#262626;"></div>
<div class="a" style="left:288.10px;top:509.88px;width:8.40px;height:8.20px;background:#262626;"></div>
<div class="a" style="left:299.40px;top:509.88px;width:8.40px;height:8.20px;background:#262626;"></div>
<div class="a" style="left:2.30px;top:521.16px;width:331.80px;height:11.80px;background:#3d3d3d;"></div>
<div class="a" style="left:5.00px;top:522.36px;width:9.20px;height:9.60px;background:#262626;"></div>
<svg style="left:5.60px;top:524.26px;" width="8" height="5.6" viewBox="0 0 8 5.6"><path d="M0 2.8 Q4 -1.6 8 2.8 Q4 7.2 0 2.8 Z M4 1 A1.8 1.8 0 1 0 4.01 1 Z" fill="#e6e6e6" fill-rule="evenodd"/><circle cx="4" cy="2.8" r="0.9" fill="#e6e6e6"/></svg>
<div class="a" style="left:28.10px;top:522.76px;width:8.20px;height:8.40px;background:#262626;"></div>
<div class="a" style="left:39.50px;top:522.76px;width:8.30px;height:8.40px;background:#262626;"></div>
<svg style="left:56.90px;top:523.86px;" width="4.0" height="6.4" viewBox="0 0 4 6.4"><path d="M0.5 0.4 L3.4 3.2 L0.5 6" fill="none" stroke="#d8d8d8" stroke-width="1.25"/></svg>
<div class="a" style="left:66.00px;top:522.66px;width:9.10px;height:9.00px;background:#e67cd5;"></div>
<div class="t" style="left:81.90px;top:520.26px;font-size:9.2px;color:#d2d2d2;">3</div>
<svg style="left:105.00px;top:522.16px;" width="8.2" height="9.8" viewBox="0 0 8.2 9.8"><path d="M0.4 0.4 L6 0.4 L7.8 2.2 L7.8 9.4 L0.4 9.4 Z" fill="#2e0900" stroke="#9a5412" stroke-width="0.7"/></svg>
<div class="t" style="left:106.50px;top:518.66px;font-size:5px;color:#f5a433;font-weight:700;transform:scaleX(1.0000);transform-origin:0 50%;">Ai</div>
<div class="a" style="left:108.20px;top:529.16px;width:1.80px;height:1.10px;background:#c9a0a0;"></div>
<div class="t" style="left:118.40px;top:520.46px;font-size:9.2px;color:#dadada;transform:scaleX(0.9286);transform-origin:0 50%;">left antler</div>
<div class="a" style="left:219.80px;top:522.76px;width:8.70px;height:8.20px;background:#262626;"></div>
<svg style="left:219.80px;top:523.26px;" width="8.8" height="7.8" viewBox="0 0 8.8 7.8"><path d="M2 4.3 L2 3.2 Q2.2 0.5 4.4 0.5 Q6.6 0.5 6.8 3.2 L6.8 4.3" fill="none" stroke="#e6e6e6" stroke-width="0.9"/><path d="M0 4.7 L8.8 4.7" stroke="#e6e6e6" stroke-width="0.75"/><path d="M3.4 2.4 L3.4 7 M5.4 2.4 L5.4 7 M2.2 7.1 L3.9 7.1 M4.9 7.1 L6.6 7.1" stroke="#e6e6e6" stroke-width="0.8"/></svg>
<div class="a" style="left:231.00px;top:522.76px;width:8.70px;height:8.20px;background:#262626;"></div>
<div class="a" style="left:242.30px;top:522.76px;width:8.70px;height:8.20px;background:#262626;"></div>
<svg style="left:242.30px;top:522.76px;" width="8.7" height="8.2" viewBox="0 0 8.7 8.2"><path d="M0.4 7.8 L8.2 0.4" stroke="#dedede" stroke-width="1.1"/></svg>
<div class="a" style="left:276.90px;top:522.76px;width:8.40px;height:8.20px;background:#262626;"></div>
<div class="a" style="left:288.10px;top:522.76px;width:8.40px;height:8.20px;background:#262626;"></div>
<div class="a" style="left:299.40px;top:522.76px;width:8.40px;height:8.20px;background:#262626;"></div>
<div class="a" style="left:2.30px;top:534.04px;width:331.80px;height:11.80px;background:#3d3d3d;"></div>
<div class="a" style="left:5.00px;top:535.24px;width:9.20px;height:9.60px;background:#262626;"></div>
<svg style="left:5.60px;top:537.14px;" width="8" height="5.6" viewBox="0 0 8 5.6"><path d="M0 2.8 Q4 -1.6 8 2.8 Q4 7.2 0 2.8 Z M4 1 A1.8 1.8 0 1 0 4.01 1 Z" fill="#e6e6e6" fill-rule="evenodd"/><circle cx="4" cy="2.8" r="0.9" fill="#e6e6e6"/></svg>
<div class="a" style="left:28.10px;top:535.64px;width:8.20px;height:8.40px;background:#262626;"></div>
<div class="a" style="left:39.50px;top:535.64px;width:8.30px;height:8.40px;background:#262626;"></div>
<svg style="left:56.90px;top:536.74px;" width="4.0" height="6.4" viewBox="0 0 4 6.4"><path d="M0.5 0.4 L3.4 3.2 L0.5 6" fill="none" stroke="#d8d8d8" stroke-width="1.25"/></svg>
<div class="a" style="left:66.00px;top:535.54px;width:9.10px;height:9.00px;background:#b14242;"></div>
<div class="t" style="left:81.90px;top:533.14px;font-size:9.2px;color:#d2d2d2;">4</div>
<div class="t" style="left:105.60px;top:532.94px;font-size:10px;color:#dcdcdc;font-weight:700;font-family:'Liberation Serif','DejaVu Serif',serif;transform:scaleX(1.0042);transform-origin:0 50%;">T</div>
<div class="t" style="left:118.40px;top:533.34px;font-size:8.4px;color:#dadada;transform:scaleX(0.8836);transform-origin:0 50%;">DEER DESIGN</div>
<div class="a" style="left:219.80px;top:535.64px;width:8.70px;height:8.20px;background:#262626;"></div>
<svg style="left:219.80px;top:536.14px;" width="8.8" height="7.8" viewBox="0 0 8.8 7.8"><path d="M2 4.3 L2 3.2 Q2.2 0.5 4.4 0.5 Q6.6 0.5 6.8 3.2 L6.8 4.3" fill="none" stroke="#e6e6e6" stroke-width="0.9"/><path d="M0 4.7 L8.8 4.7" stroke="#e6e6e6" stroke-width="0.75"/><path d="M3.4 2.4 L3.4 7 M5.4 2.4 L5.4 7 M2.2 7.1 L3.9 7.1 M4.9 7.1 L6.6 7.1" stroke="#e6e6e6" stroke-width="0.8"/></svg>
<div class="a" style="left:231.00px;top:535.64px;width:8.70px;height:8.20px;background:#3a3a3a;"></div>
<svg style="left:231.20px;top:535.74px;" width="8.4" height="8.4" viewBox="0 0 8.4 8.4"><circle cx="4.2" cy="4.2" r="1.5" fill="none" stroke="#787878" stroke-width="0.9"/><path d="M4.2 0 v1.7 M4.2 6.7 v1.7 M0 4.2 h1.7 M6.7 4.2 h1.7 M1.2 1.2 l1.2 1.2 M6 6 l1.2 1.2 M7.2 1.2 l-1.2 1.2 M1.2 7.2 l1.2 -1.2" stroke="#787878" stroke-width="0.8"/></svg>
<div class="a" style="left:242.30px;top:535.64px;width:8.70px;height:8.20px;background:#262626;"></div>
<svg style="left:242.30px;top:535.64px;" width="8.7" height="8.2" viewBox="0 0 8.7 8.2"><path d="M0.4 7.8 L8.2 0.4" stroke="#dedede" stroke-width="1.1"/></svg>
<div class="a" style="left:253.80px;top:535.64px;width:8.50px;height:8.20px;background:#262626;"></div>
<div class="t" style="left:253.80px;top:532.34px;font-size:10.4px;color:#dcdcdc;font-family:'Liberation Serif','DejaVu Serif',serif;transform:scaleX(1.2000);transform-origin:0 50%;font-style:italic;">fx</div>
<div class="a" style="left:276.90px;top:535.64px;width:8.40px;height:8.20px;background:#262626;"></div>
<div class="a" style="left:288.10px;top:535.64px;width:8.40px;height:8.20px;background:#262626;"></div>
<div class="a" style="left:299.40px;top:535.64px;width:8.40px;height:8.20px;background:#262626;"></div>
<div class="a" style="left:2.30px;top:546.92px;width:331.80px;height:11.80px;background:#3d3d3d;"></div>
<div class="a" style="left:5.00px;top:548.12px;width:9.20px;height:9.60px;background:#262626;"></div>
<div class="a" style="left:39.50px;top:548.52px;width:8.30px;height:8.40px;background:#262626;"></div>
<svg style="left:56.90px;top:549.62px;" width="4.0" height="6.4" viewBox="0 0 4 6.4"><path d="M0.5 0.4 L3.4 3.2 L0.5 6" fill="none" stroke="#d8d8d8" stroke-width="1.25"/></svg>
<div class="a" style="left:66.00px;top:548.42px;width:9.10px;height:9.00px;background:#6b7de0;"></div>
<div class="t" style="left:81.90px;top:546.02px;font-size:9.2px;color:#d2d2d2;">5</div>
<svg style="left:104.80px;top:548.62px;" width="8.8" height="8.4" viewBox="0 0 8.8 8.4"><path d="M4.4 0 L5.6 3 L8.8 3.2 L6.3 5.2 L7.1 8.4 L4.4 6.6 L1.7 8.4 L2.5 5.2 L0 3.2 L3.2 3 Z" fill="#dcdcdc"/></svg>
<svg style="left:116.90px;top:548.82px;" width="9.2" height="8" viewBox="0 0 9.2 8"><rect x="0.5" y="0.5" width="8.2" height="7" fill="#2a2a2a" stroke="#cfcfcf" stroke-width="0.9"/><circle cx="4.6" cy="4" r="1.7" fill="#e8e8e8"/></svg>
<div class="t" style="left:130.60px;top:546.22px;font-size:9.2px;color:#dadada;transform:scaleX(0.9187);transform-origin:0 50%;">mask- mt-hood</div>
<div class="a" style="left:219.80px;top:548.52px;width:8.70px;height:8.20px;background:#262626;"></div>
<svg style="left:219.80px;top:549.02px;" width="8.8" height="7.8" viewBox="0 0 8.8 7.8"><path d="M2 4.3 L2 3.2 Q2.2 0.5 4.4 0.5 Q6.6 0.5 6.8 3.2 L6.8 4.3" fill="none" stroke="#e6e6e6" stroke-width="0.9"/><path d="M0 4.7 L8.8 4.7" stroke="#e6e6e6" stroke-width="0.75"/><path d="M3.4 2.4 L3.4 7 M5.4 2.4 L5.4 7 M2.2 7.1 L3.9 7.1 M4.9 7.1 L6.6 7.1" stroke="#e6e6e6" stroke-width="0.8"/></svg>
<div class="a" style="left:231.00px;top:548.52px;width:8.70px;height:8.20px;background:#3a3a3a;"></div>
<svg style="left:231.20px;top:548.62px;" width="8.4" height="8.4" viewBox="0 0 8.4 8.4"><circle cx="4.2" cy="4.2" r="1.5" fill="none" stroke="#787878" stroke-width="0.9"/><path d="M4.2 0 v1.7 M4.2 6.7 v1.7 M0 4.2 h1.7 M6.7 4.2 h1.7 M1.2 1.2 l1.2 1.2 M6 6 l1.2 1.2 M7.2 1.2 l-1.2 1.2 M1.2 7.2 l1.2 -1.2" stroke="#787878" stroke-width="0.8"/></svg>
<div class="a" style="left:242.30px;top:548.52px;width:8.70px;height:8.20px;background:#262626;"></div>
<svg style="left:242.30px;top:548.52px;" width="8.7" height="8.2" viewBox="0 0 8.7 8.2"><path d="M0.4 7.8 L8.2 0.4" stroke="#dedede" stroke-width="1.1"/></svg>
<div class="a" style="left:276.90px;top:548.52px;width:8.40px;height:8.20px;background:#262626;"></div>
<div class="a" style="left:299.40px;top:548.52px;width:8.40px;height:8.20px;background:#262626;"></div>
<div class="a" style="left:2.30px;top:559.80px;width:331.80px;height:11.80px;background:#3d3d3d;"></div>
<div class="a" style="left:5.00px;top:561.00px;width:9.20px;height:9.60px;background:#262626;"></div>
<svg style="left:5.60px;top:562.90px;" width="8" height="5.6" viewBox="0 0 8 5.6"><path d="M0 2.8 Q4 -1.6 8 2.8 Q4 7.2 0 2.8 Z M4 1 A1.8 1.8 0 1 0 4.01 1 Z" fill="#e6e6e6" fill-rule="evenodd"/><circle cx="4" cy="2.8" r="0.9" fill="#e6e6e6"/></svg>
<div class="a" style="left:28.10px;top:561.40px;width:8.20px;height:8.40px;background:#262626;"></div>
<div class="a" style="left:39.50px;top:561.40px;width:8.30px;height:8.40px;background:#262626;"></div>
<svg style="left:56.90px;top:562.50px;" width="4.0" height="6.4" viewBox="0 0 4 6.4"><path d="M0.5 0.4 L3.4 3.2 L0.5 6" fill="none" stroke="#d8d8d8" stroke-width="1.25"/></svg>
<div class="a" style="left:66.00px;top:561.30px;width:9.10px;height:9.00px;background:#e6d85a;"></div>
<div class="t" style="left:81.90px;top:558.90px;font-size:9.2px;color:#d2d2d2;">6</div>
<svg style="left:105.00px;top:560.80px;" width="8.2" height="9.8" viewBox="0 0 8.2 9.8"><path d="M0.4 0.4 L6 0.4 L7.8 2.2 L7.8 9.4 L0.4 9.4 Z" fill="#2e0900" stroke="#9a5412" stroke-width="0.7"/></svg>
<div class="t" style="left:106.50px;top:557.30px;font-size:5px;color:#f5a433;font-weight:700;transform:scaleX(1.0000);transform-origin:0 50%;">Ai</div>
<div class="a" style="left:108.20px;top:567.80px;width:1.80px;height:1.10px;background:#c9a0a0;"></div>
<svg style="left:116.90px;top:561.70px;" width="9.2" height="8" viewBox="0 0 9.2 8"><rect x="0.5" y="0.5" width="8.2" height="7" fill="#5a5a5a" stroke="#cfcfcf" stroke-width="0.9"/><circle cx="4.6" cy="4" r="2.2" fill="#2a2a2a"/><path d="M1.4 1.4 h1.4 M6.4 1.4 h1.4 M1.4 6.6 h1.4 M6.4 6.6 h1.4" stroke="#cfcfcf" stroke-width="0.9"/></svg>
<div class="t" style="left:130.60px;top:559.10px;font-size:9.2px;color:#dadada;transform:scaleX(0.9306);transform-origin:0 50%;">mt.hood</div>
<div class="a" style="left:219.80px;top:561.40px;width:8.70px;height:8.20px;background:#262626;"></div>
<svg style="left:219.80px;top:561.90px;" width="8.8" height="7.8" viewBox="0 0 8.8 7.8"><path d="M2 4.3 L2 3.2 Q2.2 0.5 4.4 0.5 Q6.6 0.5 6.8 3.2 L6.8 4.3" fill="none" stroke="#e6e6e6" stroke-width="0.9"/><path d="M0 4.7 L8.8 4.7" stroke="#e6e6e6" stroke-width="0.75"/><path d="M3.4 2.4 L3.4 7 M5.4 2.4 L5.4 7 M2.2 7.1 L3.9 7.1 M4.9 7.1 L6.6 7.1" stroke="#e6e6e6" stroke-width="0.8"/></svg>
<div class="a" style="left:231.00px;top:561.40px;width:8.70px;height:8.20px;background:#262626;"></div>
<div class="a" style="left:242.30px;top:561.40px;width:8.70px;height:8.20px;background:#262626;"></div>
<svg style="left:242.30px;top:561.40px;" width="8.7" height="8.2" viewBox="0 0 8.7 8.2"><path d="M0.4 7.8 L8.2 0.4" stroke="#dedede" stroke-width="1.1"/></svg>
<div class="a" style="left:276.90px;top:561.40px;width:8.40px;height:8.20px;background:#262626;"></div>
<div class="a" style="left:288.10px;top:561.40px;width:8.40px;height:8.20px;background:#262626;"></div>
<div class="a" style="left:299.40px;top:561.40px;width:8.40px;height:8.20px;background:#262626;"></div>
<div class="a" style="left:2.30px;top:572.68px;width:331.80px;height:11.80px;background:#3d3d3d;"></div>
<div class="a" style="left:5.00px;top:573.88px;width:9.20px;height:9.60px;background:#262626;"></div>
<svg style="left:5.60px;top:575.78px;" width="8" height="5.6" viewBox="0 0 8 5.6"><path d="M0 2.8 Q4 -1.6 8 2.8 Q4 7.2 0 2.8 Z M4 1 A1.8 1.8 0 1 0 4.01 1 Z" fill="#e6e6e6" fill-rule="evenodd"/><circle cx="4" cy="2.8" r="0.9" fill="#e6e6e6"/></svg>
<div class="a" style="left:28.10px;top:574.28px;width:8.20px;height:8.40px;background:#262626;"></div>
<div class="a" style="left:39.50px;top:574.28px;width:8.30px;height:8.40px;background:#262626;"></div>
<svg style="left:40.20px;top:574.18px;" width="7.4" height="8.2" viewBox="0 0 7.4 8.2"><path d="M1.6 3.8 L1.6 2.4 Q1.7 0.5 3.7 0.5 Q5.7 0.5 5.8 2.4 L5.8 3.8" fill="none" stroke="#e0e0e0" stroke-width="1"/><rect x="0.2" y="3.6" width="7" height="4.6" fill="#e0e0e0"/><rect x="3.2" y="5" width="1" height="1.8" fill="#262626"/></svg>
<svg style="left:56.90px;top:575.38px;" width="4.0" height="6.4" viewBox="0 0 4 6.4"><path d="M0.5 0.4 L3.4 3.2 L0.5 6" fill="none" stroke="#d8d8d8" stroke-width="1.25"/></svg>
<div class="a" style="left:66.00px;top:574.18px;width:9.10px;height:9.00px;background:#b14242;"></div>
<div class="t" style="left:81.90px;top:571.78px;font-size:9.2px;color:#d2d2d2;">7</div>
<div class="a" style="left:104.40px;top:573.58px;width:10.00px;height:10.00px;background:#ffffff;border-radius:0.8px"></div>
<div class="t" style="left:118.40px;top:571.98px;font-size:9.2px;color:#dadada;transform:scaleX(0.9060);transform-origin:0 50%;">background</div>
<div class="a" style="left:219.80px;top:574.28px;width:8.70px;height:8.20px;background:#262626;"></div>
<svg style="left:219.80px;top:574.78px;" width="8.8" height="7.8" viewBox="0 0 8.8 7.8"><path d="M2 4.3 L2 3.2 Q2.2 0.5 4.4 0.5 Q6.6 0.5 6.8 3.2 L6.8 4.3" fill="none" stroke="#e6e6e6" stroke-width="0.9"/><path d="M0 4.7 L8.8 4.7" stroke="#e6e6e6" stroke-width="0.75"/><path d="M3.4 2.4 L3.4 7 M5.4 2.4 L5.4 7 M2.2 7.1 L3.9 7.1 M4.9 7.1 L6.6 7.1" stroke="#e6e6e6" stroke-width="0.8"/></svg>
<div class="a" style="left:231.00px;top:574.28px;width:8.70px;height:8.20px;background:#262626;"></div>
<div class="a" style="left:242.30px;top:574.28px;width:8.70px;height:8.20px;background:#262626;"></div>
<svg style="left:242.30px;top:574.28px;" width="8.7" height="8.2" viewBox="0 0 8.7 8.2"><path d="M0.4 7.8 L8.2 0.4" stroke="#dedede" stroke-width="1.1"/></svg>
<div class="a" style="left:276.90px;top:574.28px;width:8.40px;height:8.20px;background:#262626;"></div>
<div class="a" style="left:288.10px;top:574.28px;width:8.40px;height:8.20px;background:#262626;"></div>
<div class="a" style="left:299.40px;top:574.28px;width:8.40px;height:8.20px;background:#262626;"></div>
<div class="a" style="left:5.20px;top:599.60px;width:10.20px;height:10.40px;background:#4a4a4a;border-radius:2px"></div>
<svg style="left:7.00px;top:601.20px;" width="7" height="7.4" viewBox="0 0 7 7.4"><rect x="0.4" y="0.4" width="4.4" height="4.6" fill="none" stroke="#d0d0d0" stroke-width="0.8"/><rect x="2.2" y="2.4" width="4.4" height="4.6" fill="#4a4a4a" stroke="#d0d0d0" stroke-width="0.8"/><path d="M3.4 4.8 h2" stroke="#d0d0d0" stroke-width="0.8"/></svg>
<svg style="left:20.60px;top:600.80px;" width="8" height="8" viewBox="0 0 8 8"><circle cx="3" cy="3" r="2.6" fill="none" stroke="#d0d0d0" stroke-width="0.8"/><rect x="3" y="3" width="4.6" height="4.6" fill="#323232" stroke="#d0d0d0" stroke-width="0.8"/></svg>
<div class="t" style="left:35.40px;top:597.40px;font-size:9.4px;color:#d0d0d0;transform:scaleX(1.1810);transform-origin:0 50%;">{}</div>
<svg style="left:49.00px;top:600.80px;" width="9" height="7.6" viewBox="0 0 9 7.6"><circle cx="3.4" cy="2.6" r="2.4" fill="#d0d0d0"/><path d="M0 7.4 Q0.2 5 3.4 5 Q6.6 5 6.8 7.4 Z" fill="#d0d0d0"/><path d="M6.8 2.2 L8.8 0.4 M7.4 4 L9 4" stroke="#d0d0d0" stroke-width="0.8"/></svg>
<div class="t" style="left:79.70px;top:598.60px;font-size:9.2px;color:#c8c8c8;transform:scaleX(0.8831);transform-origin:0 50%;">Frame Render Time:</div>
<div class="t" style="left:159.80px;top:598.60px;font-size:9.2px;color:#62dba2;font-weight:700;transform:scaleX(0.9021);transform-origin:0 50%;">29ms</div>
<div class="t" style="left:223.30px;top:598.40px;font-size:9.2px;color:#c8c8c8;transform:scaleX(0.8925);transform-origin:0 50%;">Toggle Switches / Modes</div>
<div class="a" style="left:334.20px;top:464.40px;width:5.50px;height:120.40px;background:#464646;"></div>
<div class="a" style="left:858.10px;top:464.40px;width:5.10px;height:120.40px;background:#464646;"></div>
<div class="a" style="left:334.20px;top:585.20px;width:529.00px;height:12.60px;background:#383838;"></div>
<div class="a" style="left:339.60px;top:457.40px;width:518.60px;height:6.90px;background:#9a9a9a;border-top:0.8px solid #1c1c1c"></div>
<div class="a" style="left:334.20px;top:457.60px;width:5.40px;height:6.70px;background:#3d9bf5;border-radius:3.4px 0 0 3.4px"></div>
<div class="a" style="left:858.20px;top:457.60px;width:5.00px;height:6.70px;background:#3d9bf5;border-radius:0 3.4px 3.4px 0"></div>
<div class="a" style="left:339.70px;top:464.30px;width:518.40px;height:15.30px;background:#2b2b2b;"></div>
<div class="a" style="left:334.2px;top:462px;width:528.8px;height:20px;overflow:hidden">
<div class="t" style="left:-0.10px;top:3.20px;font-size:7.8px;color:#d6d6d6;transform:scaleX(0.8649);transform-origin:0 50%;">0:00f</div>
<div class="a" style="left:5.30px;top:14.20px;width:0.90px;height:3.40px;background:#c0c0c0;"></div>
<div class="t" style="left:46.23px;top:3.20px;font-size:7.8px;color:#d6d6d6;transform:scaleX(0.9637);transform-origin:0 50%;">00:15f</div>
<div class="a" style="left:57.13px;top:14.20px;width:0.90px;height:3.40px;background:#c0c0c0;"></div>
<div class="t" style="left:98.06px;top:3.20px;font-size:7.8px;color:#d6d6d6;transform:scaleX(0.9637);transform-origin:0 50%;">01:00f</div>
<div class="a" style="left:108.96px;top:14.20px;width:0.90px;height:3.40px;background:#c0c0c0;"></div>
<div class="t" style="left:149.89px;top:3.20px;font-size:7.8px;color:#d6d6d6;transform:scaleX(0.9637);transform-origin:0 50%;">01:15f</div>
<div class="a" style="left:160.79px;top:14.20px;width:0.90px;height:3.40px;background:#c0c0c0;"></div>
<div class="t" style="left:201.72px;top:3.20px;font-size:7.8px;color:#d6d6d6;transform:scaleX(0.9637);transform-origin:0 50%;">02:00f</div>
<div class="a" style="left:212.62px;top:14.20px;width:0.90px;height:3.40px;background:#c0c0c0;"></div>
<div class="t" style="left:253.55px;top:3.20px;font-size:7.8px;color:#d6d6d6;transform:scaleX(0.9637);transform-origin:0 50%;">02:15f</div>
<div class="a" style="left:264.45px;top:14.20px;width:0.90px;height:3.40px;background:#c0c0c0;"></div>
<div class="t" style="left:305.38px;top:3.20px;font-size:7.8px;color:#d6d6d6;transform:scaleX(0.9637);transform-origin:0 50%;">03:00f</div>
<div class="a" style="left:316.28px;top:14.20px;width:0.90px;height:3.40px;background:#c0c0c0;"></div>
<div class="t" style="left:357.21px;top:3.20px;font-size:7.8px;color:#d6d6d6;transform:scaleX(0.9637);transform-origin:0 50%;">03:15f</div>
<div class="a" style="left:368.11px;top:14.20px;width:0.90px;height:3.40px;background:#c0c0c0;"></div>
<div class="t" style="left:409.04px;top:3.20px;font-size:7.8px;color:#d6d6d6;transform:scaleX(0.9637);transform-origin:0 50%;">04:00f</div>
<div class="a" style="left:419.94px;top:14.20px;width:0.90px;height:3.40px;background:#c0c0c0;"></div>
<div class="t" style="left:460.87px;top:3.20px;font-size:7.8px;color:#d6d6d6;transform:scaleX(0.9637);transform-origin:0 50%;">04:15f</div>
<div class="a" style="left:471.77px;top:14.20px;width:0.90px;height:3.40px;background:#c0c0c0;"></div>
<div class="t" style="left:512.70px;top:3.20px;font-size:7.8px;color:#d6d6d6;transform:scaleX(0.9637);transform-origin:0 50%;">05:00f</div>
<div class="a" style="left:523.60px;top:14.20px;width:0.90px;height:3.40px;background:#c0c0c0;"></div>
</div>
<div class="a" style="left:339.70px;top:480.20px;width:518.40px;height:11.10px;background:#909090;"></div>
<div class="a" style="left:334.40px;top:480.40px;width:5.20px;height:10.60px;background:#3d9bf5;border-radius:2.6px 0 0 2.6px"></div>
<div class="a" style="left:858.20px;top:480.40px;width:4.60px;height:10.80px;background:#3d9bf5;border-radius:0 2.6px 2.6px 0"></div>
<div class="a" style="left:339.70px;top:491.30px;width:518.40px;height:0.80px;background:#2a2a2a;"></div>
<div class="a" style="left:339.70px;top:492.50px;width:518.40px;height:2.10px;background:#17b017;"></div>
<div class="a" style="left:339.70px;top:494.60px;width:518.40px;height:0.90px;background:#2a2a2a;"></div>
<div class="a" style="left:339.70px;top:495.40px;width:518.40px;height:11.80px;background:#3f50b2;"></div>
<div class="a" style="left:339.70px;top:507.20px;width:518.40px;height:1.08px;background:#2a2a2a;"></div>
<div class="a" style="left:339.70px;top:508.28px;width:518.40px;height:11.80px;background:#7b79a3;"></div>
<div class="a" style="left:339.70px;top:520.08px;width:518.40px;height:1.08px;background:#2a2a2a;"></div>
<div class="a" style="left:339.70px;top:521.16px;width:518.40px;height:11.80px;background:#c24aae;"></div>
<div class="a" style="left:339.70px;top:532.96px;width:518.40px;height:1.08px;background:#2a2a2a;"></div>
<div class="a" style="left:339.70px;top:534.04px;width:518.40px;height:11.80px;background:#7b3636;"></div>
<div class="a" style="left:339.70px;top:545.84px;width:518.40px;height:1.08px;background:#2a2a2a;"></div>
<div class="a" style="left:339.70px;top:546.92px;width:518.40px;height:11.80px;background:#3f50b2;"></div>
<div class="a" style="left:339.70px;top:558.72px;width:518.40px;height:1.08px;background:#2a2a2a;"></div>
<div class="a" style="left:339.70px;top:559.80px;width:518.40px;height:11.80px;background:#c2b44c;"></div>
<div class="a" style="left:339.70px;top:571.60px;width:518.40px;height:1.08px;background:#2a2a2a;"></div>
<div class="a" style="left:339.70px;top:572.68px;width:518.40px;height:11.80px;background:#7b3636;"></div>
<div class="a" style="left:339.70px;top:584.48px;width:518.40px;height:1.08px;background:#2a2a2a;"></div>
<div class="a" style="left:667.70px;top:476.00px;width:1.00px;height:122.00px;background:#66a4f2;"></div>
<svg style="left:663.60px;top:467.40px;" width="9.4" height="9" viewBox="0 0 9.4 9"><path d="M0.4 0.4 L9 0.4 L9 4.6 L4.7 8.8 L0.4 4.6 Z" fill="#4f9af2" stroke="#9cc8ff" stroke-width="0.6"/></svg>
<svg style="left:866.80px;top:481.60px;" width="8.4" height="11" viewBox="0 0 8.4 11"><path d="M0 0 L8.4 0 L8.4 6.6 L4.2 10.8 L0 6.6 Z" fill="#c4c4c4"/></svg>
<svg style="left:864.80px;top:497.40px;" width="11" height="8.4" viewBox="0 0 11 8.4"><path d="M0.6 4.6 L4.6 0.6 L10.4 0.6 L10.4 4.6 L6 4.6 L6 7.6 L3.4 7.6 Z" fill="none" stroke="#c4c4c4" stroke-width="0.9"/><path d="M6.6 1 h3.6 v3.2 h-3.6 Z" fill="#c4c4c4"/></svg>
<svg style="left:338.80px;top:603.60px;" width="7" height="4" viewBox="0 0 7 4"><path d="M0 4 L2.4 0.8 L3.8 2.4 L4.8 1.4 L7 4 Z" fill="#c4c4c4"/></svg>
<div class="a" style="left:351.20px;top:601.50px;width:8.00px;height:8.00px;background:transparent;border-radius:50%;border:1.5px solid #dcdcdc"></div>
<div class="a" style="left:362.80px;top:604.90px;width:32.80px;height:0.90px;background:#5a5a5a;"></div>
<svg style="left:399.80px;top:602.20px;" width="12.2" height="5.8" viewBox="0 0 12.2 5.8"><path d="M0 5.8 L3.6 0.6 L5.8 3.4 L8 0 L12.2 5.8 Z" fill="#c4c4c4"/></svg>
<div class="a" style="left:0.00px;top:0.00px;width:3.00px;height:3.00px;background:radial-gradient(circle at 100% 100%, rgba(0,0,0,0) 2.6px, #1c1c1c 3.2px);"></div>
<div class="a" style="left:1021.00px;top:0.00px;width:3.00px;height:3.00px;background:radial-gradient(circle at 0% 100%, rgba(0,0,0,0) 2.6px, #7d8f9c 3.2px);"></div>
<div class="a" style="left:0.00px;top:609.00px;width:3.00px;height:3.00px;background:radial-gradient(circle at 100% 0%, rgba(0,0,0,0) 2.6px, #8a6a30 3.2px);"></div>
<div class="a" style="left:1021.00px;top:609.00px;width:3.00px;height:3.00px;background:radial-gradient(circle at 0% 0%, rgba(0,0,0,0) 2.6px, #1c1c1c 3.2px);"></div>
</div></body></html>
